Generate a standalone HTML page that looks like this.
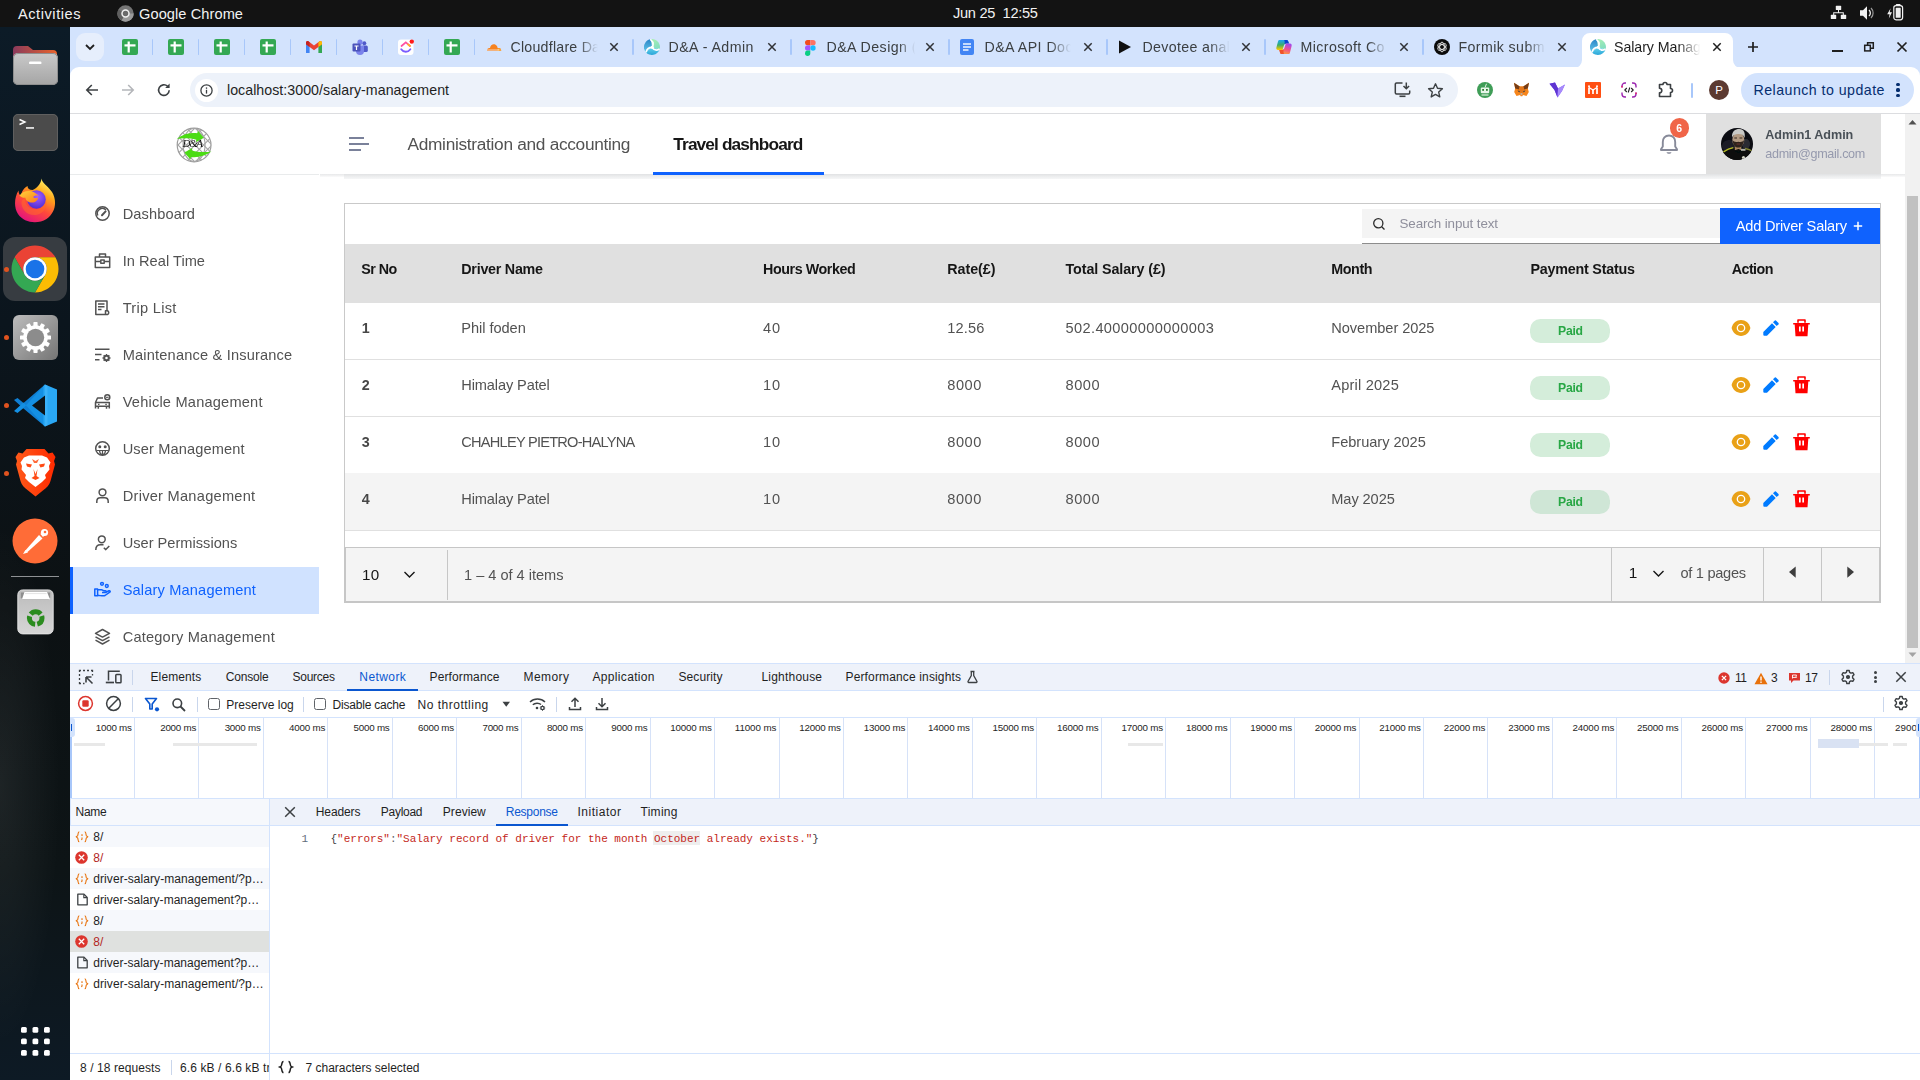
<!DOCTYPE html>
<html><head><meta charset="utf-8"><title>Salary Management</title>
<style>
html,body{margin:0;padding:0}
body{width:1920px;height:1080px;overflow:hidden;position:relative;background:#fff;font-family:"Liberation Sans",sans-serif}
body div,body span,body svg{position:absolute;display:block;box-sizing:border-box}
span{white-space:pre}
.g{left:70px;width:1850px;will-change:transform;overflow:hidden}
.gi{left:-70px;width:1920px;height:1080px}

</style></head>
<body>
<div style="left:0px;top:0px;width:1920px;height:27px;background:#131313;"></div>
<span style="left:18px;top:6px;font-size:14.6px;line-height:16px;color:#f2f2f2;letter-spacing:0.547px;">Activities</span>
<svg style="left:116.5px;top:5px;" width="17" height="17" viewBox="0 0 17 17"><circle cx="8.500" cy="8.500" r="8.200" fill="#757575"/><path d="M8.500 8.500 L16.700 8.500 A8.200 8.200 0 0 1 4.400 15.600z" fill="#9a9a9a"/><path d="M8.500 8.500 L4.400 15.600 A8.200 8.200 0 0 1 1.400 4.400z" fill="#5f5f5f"/><circle cx="8.500" cy="8.500" r="3.500" fill="#6a6a6a" stroke="#f0f0f0" stroke-width="1.500"/></svg>
<span style="left:139px;top:6px;font-size:14.6px;line-height:16px;color:#f2f2f2;letter-spacing:0.081px;">Google Chrome</span>
<span style="left:953px;top:5px;font-size:14.6px;line-height:16px;color:#f2f2f2;letter-spacing:-0.288px;">Jun 25  12:55</span>
<svg style="left:1830px;top:5px;" width="17" height="16" viewBox="0 0 17 16"><g fill="#f2f2f2"><rect x="5.800" y="0.800" width="5.400" height="4.300" rx="0.600"/><rect x="0.800" y="9.800" width="5.400" height="4.300" rx="0.600"/><rect x="10.800" y="9.800" width="5.400" height="4.300" rx="0.600"/><path d="M8 5h1v2.300h4.800v2.700h-1V8.300H4.200v1.700h-1V7.300H8z"/></g></svg>
<svg style="left:1859px;top:5px;" width="17" height="16" viewBox="0 0 17 16"><path d="M1 5.300h3l4-4v13.400l-4-4H1z" fill="#f2f2f2"/><path d="M10 5a4 4 0 0 1 0 6" stroke="#f2f2f2" stroke-width="1.300" fill="none"/><path d="M12 3a7 7 0 0 1 0 10" stroke="#9a9a9a" stroke-width="1.200" fill="none"/></svg>
<svg style="left:1886px;top:3px;" width="19" height="19" viewBox="0 0 19 19"><path d="M4.600 5.300 L1.200 11.300 H3.600 L2.800 15.600 L6 9.300 H3.700z" fill="#f2f2f2"/><rect x="7.800" y="2.600" width="8.800" height="14.200" rx="2.200" fill="none" stroke="#f2f2f2" stroke-width="1.200"/><rect x="9.800" y="0.900" width="4.800" height="1.800" rx="0.800" fill="#f2f2f2"/><rect x="9.700" y="4.800" width="5" height="10" rx="0.600" fill="#eeeeee"/></svg>
<div style="left:0px;top:27px;width:70px;height:1053px;background:radial-gradient(ellipse 60px 260px at 0px 72%,rgba(255,255,255,0.070),rgba(255,255,255,0) 100%),linear-gradient(180deg,#0c1b27 0%,#0b151d 28%,#0c1113 55%,#0d1416 80%,#0d1a25 100%);"></div>
<svg style="left:13px;top:44px;" width="45" height="42" viewBox="0 0 45 42"><defs><linearGradient id="fg1" x1="0" y1="0" x2="1" y2="0"><stop offset="0" stop-color="#8a3a5c"/><stop offset="1" stop-color="#e9632b"/></linearGradient><linearGradient id="fg2" x1="0" y1="0" x2="0" y2="1"><stop offset="0" stop-color="#c9c9c9"/><stop offset="1" stop-color="#a5a5a5"/></linearGradient></defs>
<path d="M0 6 a4 4 0 0 1 4-4 h11 l5 4 h20 a4 4 0 0 1 4 4 v10 H0z" fill="url(#fg1)"/><rect x="0" y="9" width="45" height="32" rx="5" fill="url(#fg2)"/><rect x="0.5" y="9.5" width="44" height="31" rx="4.5" fill="none" stroke="#8f8f8f" stroke-width="1"/><rect x="16" y="17.5" width="12.5" height="2.6" rx="1.2" fill="#fff"/></svg>
<svg style="left:13px;top:114px;" width="45" height="38" viewBox="0 0 45 38"><rect x="0" y="0" width="45" height="37" rx="5" fill="#4b4b4b"/><rect x="0.5" y="0.5" width="44" height="36" rx="4.5" fill="none" stroke="#5f5f5f"/><path d="M6.5 5.5 L12 8 L6.5 10.5" stroke="#fff" stroke-width="1.4" fill="none"/><rect x="13" y="13.2" width="8" height="1.5" fill="#fff"/></svg>
<svg style="left:13px;top:178px;" width="44" height="45" viewBox="0 0 44 45"><defs><linearGradient id="ffb" x1="0.800" y1="0.080" x2="0.300" y2="1"><stop offset="0" stop-color="#fff060"/><stop offset="0.280" stop-color="#ffa51a"/><stop offset="0.600" stop-color="#ff4a3a"/><stop offset="1" stop-color="#e3127e"/></linearGradient><radialGradient id="ffg" cx="0.550" cy="0.350" r="0.700"><stop offset="0" stop-color="#a45cff"/><stop offset="1" stop-color="#4a2bd0"/></radialGradient><linearGradient id="ffh" x1="0" y1="0" x2="1" y2="1"><stop offset="0" stop-color="#ffd23a"/><stop offset="1" stop-color="#ff7a1a"/></linearGradient></defs>
<path d="M28.500 0.500 C29 5 35 8 39 14 C44.500 23 42.500 35 33.500 41 C24.500 46.500 11 45 5 36 C0.500 29 1.500 19 5.500 12.500 C5.500 15 6.500 17 8 18 C8.500 13 11.500 9.500 14.500 8 C14.500 10.500 16.500 12 19.500 12 C24 10 28 6 28.500 0.500z" fill="url(#ffb)"/>
<circle cx="23.500" cy="21.500" r="9.300" fill="url(#ffg)"/>
<path d="M6.500 17.500 C10 12.500 16.500 11.800 21 14.300 L26 17.800 C23.500 17 20.800 17.500 20.200 19 C21.200 20.400 23.500 20.500 25 19.600 C25 22.500 22.300 24.600 19 24.600 C15.500 24.600 12.800 22.500 12.300 19.800 C10 20 8 19 6.500 17.500z" fill="url(#ffh)"/><path d="M12.300 19.800 C11.500 25 15 30.500 21 31.300 C27.500 32 32.500 27.500 32.800 22 C35 28 31 36 23 37 C14 38 8 31 8.500 24 C9 22 10.500 20.500 12.300 19.800z" fill="#ff6a2a" opacity="0.550"/></svg>
<div style="left:3px;top:237px;width:64px;height:64px;background:#373c41;border-radius:12px"></div>
<svg style="left:11px;top:245px;" width="48" height="48" viewBox="0 0 48 48"><path d="M3.650 12.250 A23.500 23.500 0 0 1 44.350 12.250 L24 12.250 A11.750 11.750 0 0 0 13.820 29.875z" fill="#ea4335"/><path d="M44.350 12.250 A23.500 23.500 0 0 1 24 47.500 L34.180 29.875 A11.750 11.750 0 0 0 24 12.250z" fill="#fbbc04"/><path d="M24 47.500 A23.500 23.500 0 0 1 3.650 12.250 L13.820 29.875 A11.750 11.750 0 0 0 34.180 29.875z" fill="#34a853"/><circle cx="24" cy="24" r="11.750" fill="#fff"/><circle cx="24" cy="24" r="9.300" fill="#1a73e8"/></svg>
<svg style="left:12.7px;top:315px;" width="45" height="45" viewBox="0 0 45 45"><defs><linearGradient id="sg" x1="0" y1="0" x2="1" y2="1"><stop offset="0" stop-color="#bdbdbd"/><stop offset="1" stop-color="#757575"/></linearGradient></defs><rect x="0" y="0" width="45" height="45" rx="6" fill="url(#sg)"/><g transform="translate(22.500 22.500)" fill="#fff"><rect x="-2.100" y="-15.500" width="4.200" height="5" rx="0.700" transform="rotate(0)"/><rect x="-2.100" y="-15.500" width="4.200" height="5" rx="0.700" transform="rotate(30)"/><rect x="-2.100" y="-15.500" width="4.200" height="5" rx="0.700" transform="rotate(60)"/><rect x="-2.100" y="-15.500" width="4.200" height="5" rx="0.700" transform="rotate(90)"/><rect x="-2.100" y="-15.500" width="4.200" height="5" rx="0.700" transform="rotate(120)"/><rect x="-2.100" y="-15.500" width="4.200" height="5" rx="0.700" transform="rotate(150)"/><rect x="-2.100" y="-15.500" width="4.200" height="5" rx="0.700" transform="rotate(180)"/><rect x="-2.100" y="-15.500" width="4.200" height="5" rx="0.700" transform="rotate(210)"/><rect x="-2.100" y="-15.500" width="4.200" height="5" rx="0.700" transform="rotate(240)"/><rect x="-2.100" y="-15.500" width="4.200" height="5" rx="0.700" transform="rotate(270)"/><rect x="-2.100" y="-15.500" width="4.200" height="5" rx="0.700" transform="rotate(300)"/><rect x="-2.100" y="-15.500" width="4.200" height="5" rx="0.700" transform="rotate(330)"/><circle r="12.300"/></g><circle cx="22.500" cy="22.500" r="8.700" fill="#8c8c8c"/></svg>
<svg style="left:13px;top:383px;" width="45" height="45" viewBox="0 0 45 45"><path d="M32 1.500 L10.500 20 L4.500 15 L1 17 L10.500 25.500 L32 43.500z" fill="#0f7fd4"/><path d="M32 1.500 L10.500 25 L4.500 30 L1 28 L10.500 19.500 L32 43.500z" fill="#1490e4"/><path d="M32 1.500 L44 6.500 V38.500 L32 43.500 L30.500 42 V3z" fill="#2aa8f5"/><path d="M32 12.500 L19 22.500 L32 32.500z" fill="#0c1419"/><path d="M32 1.500 L34.500 2.500 V42.500 L32 43.500z" fill="#4cbcff" opacity="0.500"/></svg>
<svg style="left:15px;top:449px;" width="41" height="48" viewBox="0 0 41 48"><defs><linearGradient id="bg1" x1="0" y1="0" x2="1" y2="0"><stop offset="0" stop-color="#ff5a1a"/><stop offset="1" stop-color="#ff2a00"/></linearGradient></defs><path d="M20.500 0 L29.500 0 L33.500 4.500 L37.500 3.500 L40.500 8 L39 12 L40 15.500 L35.500 32 C34.500 36 31.500 39 28.500 41 L20.500 47.500 L12.500 41 C9.500 39 6.500 36 5.500 32 L1 15.500 L2 12 L0.500 8 L3.500 3.500 L7.500 4.500 L11.500 0z" fill="url(#bg1)"/><path d="M20.500 6.500 L27 6.500 L32 8.500 L35.500 13.500 L34 17 L34.500 20.500 L30 26 L31 29 L27 33 L20.500 38 L14 33 L10 29 L11 26 L6.500 20.500 L7 17 L5.500 13.500 L9 8.500 L14 6.500z" fill="#fff"/><path d="M11 14.500 L17 15.500 L15.500 18.500 L12 17.500z M30 14.500 L24 15.500 L25.500 18.500 L29 17.500z" fill="#ff4a14"/><path d="M18.500 20 L20.500 25 L22.500 20 L21.500 27 L24.500 29 L20.500 31 L16.500 29 L19.500 27z" fill="#ff4a14"/><path d="M17 10 L20.500 12 L24 10 L22 14 H19z" fill="#ff6a3a"/></svg>
<svg style="left:12px;top:518px;" width="46" height="46" viewBox="0 0 46 46"><circle cx="23" cy="23" r="22.5" fill="#ff6c37"/><path d="M12.500 33.500 L27 17 L30.5 20.5 L15.500 34z" fill="#fff"/><circle cx="32.500" cy="14.500" r="3.6" fill="#fff"/><path d="M28 15.500 L31 19 L33 17z" fill="#fff"/><path d="M11 36 L13.500 32 L16 34.500z" fill="#fff"/><circle cx="33" cy="14" r="1.300" fill="#ff6c37"/></svg>
<div style="left:11px;top:576px;width:48px;height:1px;background:#8e9194;"></div>
<svg style="left:16.5px;top:589px;" width="37" height="46" viewBox="0 0 37 46"><defs><linearGradient id="tg" x1="0" y1="0" x2="0" y2="1"><stop offset="0" stop-color="#bdbdbd"/><stop offset="0.250" stop-color="#c2c2c2"/><stop offset="1" stop-color="#d6d6d6"/></linearGradient></defs><rect x="0.800" y="0.900" width="35.400" height="44" rx="4.800" fill="url(#tg)" stroke="#e6e6e6" stroke-width="0.900"/><path d="M3.800 3.500 H33.200 V8.500 L31.500 10.500 H5.500 L3.800 8.500z" fill="#8e8e8e"/><path d="M7.500 2.900 H30 L33 10.300 H5z" fill="#fff"/><path d="M8 4.600 H29.500" stroke="#dcdcdc" stroke-width="0.800"/><g transform="translate(18.700 29)"><circle r="6.300" fill="none" stroke="#2b8c1f" stroke-width="5" stroke-dasharray="11 2.200" stroke-dashoffset="3"/><path d="M-1.800 -1 L1.800 -1 L0 2.200z" fill="#c8c8c8"/></g></svg>
<div style="left:3.5px;top:266.5px;width:5px;height:5px;background:#e0531f;border-radius:50%"></div>
<div style="left:3.5px;top:334.5px;width:5px;height:5px;background:#e0531f;border-radius:50%"></div>
<div style="left:3.5px;top:402.5px;width:5px;height:5px;background:#e0531f;border-radius:50%"></div>
<div style="left:3.5px;top:470.5px;width:5px;height:5px;background:#e0531f;border-radius:50%"></div>
<svg style="left:20.5px;top:1026.5px;" width="30" height="30" viewBox="0 0 30 30"><rect x="0.0" y="0.0" width="5.800" height="5.800" rx="1.500" fill="#fff"/><rect x="11.5" y="0.0" width="5.800" height="5.800" rx="1.500" fill="#fff"/><rect x="23.0" y="0.0" width="5.800" height="5.800" rx="1.500" fill="#fff"/><rect x="0.0" y="11.5" width="5.800" height="5.800" rx="1.500" fill="#fff"/><rect x="11.5" y="11.5" width="5.800" height="5.800" rx="1.500" fill="#fff"/><rect x="23.0" y="11.5" width="5.800" height="5.800" rx="1.500" fill="#fff"/><rect x="0.0" y="23.0" width="5.800" height="5.800" rx="1.500" fill="#fff"/><rect x="11.5" y="23.0" width="5.800" height="5.800" rx="1.500" fill="#fff"/><rect x="23.0" y="23.0" width="5.800" height="5.800" rx="1.500" fill="#fff"/></svg>
<div class="g" style="top:27px;height:40px"><div class="gi" style="top:-27px">
<div style="left:70px;top:27px;width:1850px;height:41px;background:#d3e3fd;"></div>
<div style="left:76px;top:33px;width:28px;height:28px;background:#e6eefc;border-radius:9px"></div>
<svg style="left:83px;top:40px;" width="14" height="14" viewBox="0 0 14 14"><path d="M3 5 L7 9 L11 5" stroke="#1f1f1f" stroke-width="1.800" fill="none"/></svg>
<svg style="left:122px;top:39px;" width="16" height="16" viewBox="0 0 16 16"><rect x="0" y="0" width="16" height="16" rx="2" fill="#34a853"/><rect x="5.600" y="2.500" width="2.200" height="11" fill="#fff"/><rect x="2.500" y="5.300" width="11" height="2.200" fill="#fff"/></svg>
<svg style="left:168px;top:39px;" width="16" height="16" viewBox="0 0 16 16"><rect x="0" y="0" width="16" height="16" rx="2" fill="#34a853"/><rect x="5.600" y="2.500" width="2.200" height="11" fill="#fff"/><rect x="2.500" y="5.300" width="11" height="2.200" fill="#fff"/></svg>
<svg style="left:214px;top:39px;" width="16" height="16" viewBox="0 0 16 16"><rect x="0" y="0" width="16" height="16" rx="2" fill="#34a853"/><rect x="5.600" y="2.500" width="2.200" height="11" fill="#fff"/><rect x="2.500" y="5.300" width="11" height="2.200" fill="#fff"/></svg>
<svg style="left:260px;top:39px;" width="16" height="16" viewBox="0 0 16 16"><rect x="0" y="0" width="16" height="16" rx="2" fill="#34a853"/><rect x="5.600" y="2.500" width="2.200" height="11" fill="#fff"/><rect x="2.500" y="5.300" width="11" height="2.200" fill="#fff"/></svg>
<svg style="left:444px;top:39px;" width="16" height="16" viewBox="0 0 16 16"><rect x="0" y="0" width="16" height="16" rx="2" fill="#34a853"/><rect x="5.600" y="2.500" width="2.200" height="11" fill="#fff"/><rect x="2.500" y="5.300" width="11" height="2.200" fill="#fff"/></svg>
<svg style="left:306px;top:41px;" width="16" height="12" viewBox="0 0 16 12"><path d="M0 1.500 V12 H3.600 V5.800z" fill="#4285f4"/><path d="M16 1.500 V12 H12.400 V5.800z" fill="#34a853"/><path d="M0 1.500 A1.500 1.500 0 0 1 2.400 0.300 L8 4.500 L13.600 0.300 A1.500 1.500 0 0 1 16 1.500 V3.200 L8 9.200 L0 3.200z" fill="#ea4335"/><path d="M0 1.500 V3.200 L3.600 5.900 V1.200 L2.400 0.300 A1.500 1.500 0 0 0 0 1.500z" fill="#c5221f"/><path d="M16 1.500 V3.200 L12.400 5.900 V1.200 L13.600 0.300 A1.500 1.500 0 0 1 16 1.500z" fill="#fbbc04"/></svg>
<svg style="left:352px;top:39px;" width="16" height="16" viewBox="0 0 16 16"><circle cx="12.300" cy="4.200" r="2" fill="#5059c9"/><rect x="10" y="6.500" width="5.800" height="6.500" rx="1.500" fill="#5059c9"/><circle cx="8" cy="3.200" r="2.600" fill="#7b83eb"/><path d="M4 6.500 H12 V12 A4 4 0 0 1 4 12z" fill="#7b83eb"/><rect x="0.500" y="4.500" width="8" height="8" rx="1" fill="#4b53bc"/><path d="M2.500 6.500 H6.500 V7.600 H5.100 V11 H3.900 V7.600 H2.500z" fill="#fff"/></svg>
<svg style="left:398px;top:39px;" width="17" height="16" viewBox="0 0 17 16"><rect x="0" y="0.500" width="15.500" height="15.500" rx="3" fill="#fff"/><path d="M3.500 7 L7.800 3.300 L12 7" stroke="#ff4fa3" stroke-width="1.700" fill="none" stroke-linecap="round"/><path d="M3.200 10.200 C5.500 13.600 10 13.600 12.400 10.200" stroke="#7b5cff" stroke-width="1.800" fill="none" stroke-linecap="round"/><path d="M10 5.300 L12 7" stroke="#ffb020" stroke-width="1.700" stroke-linecap="round"/><circle cx="13.800" cy="2.600" r="2.200" fill="#ff1a1a"/></svg>
<div style="left:151.7px;top:39px;width:1.6px;height:16px;background:#a8c7fa;border-radius:1px"></div>
<div style="left:197.7px;top:39px;width:1.6px;height:16px;background:#a8c7fa;border-radius:1px"></div>
<div style="left:243.7px;top:39px;width:1.6px;height:16px;background:#a8c7fa;border-radius:1px"></div>
<div style="left:289.7px;top:39px;width:1.6px;height:16px;background:#a8c7fa;border-radius:1px"></div>
<div style="left:335.7px;top:39px;width:1.6px;height:16px;background:#a8c7fa;border-radius:1px"></div>
<div style="left:381.7px;top:39px;width:1.6px;height:16px;background:#a8c7fa;border-radius:1px"></div>
<div style="left:427.7px;top:39px;width:1.6px;height:16px;background:#a8c7fa;border-radius:1px"></div>
<div style="left:473.7px;top:39px;width:1.6px;height:16px;background:#a8c7fa;border-radius:1px"></div>
<span style="left:510.5px;top:39px;font-size:14.2px;line-height:16px;color:#3c4043;letter-spacing:0.229px;">Cloudflare Da</span>
<div style="left:579px;top:38px;width:27px;height:18px;background:linear-gradient(90deg,rgba(211,227,253,0) 0%,#d3e3fd 70%);"></div>
<svg style="left:606px;top:39px;" width="16" height="16" viewBox="0 0 16 16"><path d="M4.3 4.3 L11.7 11.7 M11.7 4.3 L4.3 11.7" stroke="#303236" stroke-width="1.5" fill="none"/></svg>
<span style="left:668.5px;top:39px;font-size:14.2px;line-height:16px;color:#3c4043;letter-spacing:0.456px;">D&amp;A - Admin</span>
<svg style="left:764px;top:39px;" width="16" height="16" viewBox="0 0 16 16"><path d="M4.3 4.3 L11.7 11.7 M11.7 4.3 L4.3 11.7" stroke="#303236" stroke-width="1.5" fill="none"/></svg>
<div style="left:632.2px;top:39px;width:1.6px;height:16px;background:#a8c7fa;border-radius:1px"></div>
<span style="left:826.5px;top:39px;font-size:14.2px;line-height:16px;color:#3c4043;letter-spacing:0.439px;">D&amp;A Design (</span>
<div style="left:899px;top:38px;width:23px;height:18px;background:linear-gradient(90deg,rgba(211,227,253,0) 0%,#d3e3fd 70%);"></div>
<svg style="left:922px;top:39px;" width="16" height="16" viewBox="0 0 16 16"><path d="M4.3 4.3 L11.7 11.7 M11.7 4.3 L4.3 11.7" stroke="#303236" stroke-width="1.5" fill="none"/></svg>
<div style="left:790.2px;top:39px;width:1.6px;height:16px;background:#a8c7fa;border-radius:1px"></div>
<span style="left:984.5px;top:39px;font-size:14.2px;line-height:16px;color:#3c4043;letter-spacing:0.441px;">D&amp;A API Doc</span>
<div style="left:1050px;top:38px;width:30px;height:18px;background:linear-gradient(90deg,rgba(211,227,253,0) 0%,#d3e3fd 70%);"></div>
<svg style="left:1080px;top:39px;" width="16" height="16" viewBox="0 0 16 16"><path d="M4.3 4.3 L11.7 11.7 M11.7 4.3 L4.3 11.7" stroke="#303236" stroke-width="1.5" fill="none"/></svg>
<div style="left:948.2px;top:39px;width:1.6px;height:16px;background:#a8c7fa;border-radius:1px"></div>
<span style="left:1142.5px;top:39px;font-size:14.2px;line-height:16px;color:#3c4043;letter-spacing:0.354px;">Devotee anal</span>
<div style="left:1210px;top:38px;width:28px;height:18px;background:linear-gradient(90deg,rgba(211,227,253,0) 0%,#d3e3fd 70%);"></div>
<svg style="left:1238px;top:39px;" width="16" height="16" viewBox="0 0 16 16"><path d="M4.3 4.3 L11.7 11.7 M11.7 4.3 L4.3 11.7" stroke="#303236" stroke-width="1.5" fill="none"/></svg>
<div style="left:1106.2px;top:39px;width:1.6px;height:16px;background:#a8c7fa;border-radius:1px"></div>
<span style="left:1300.5px;top:39px;font-size:14.2px;line-height:16px;color:#3c4043;letter-spacing:0.398px;">Microsoft Co</span>
<div style="left:1368px;top:38px;width:28px;height:18px;background:linear-gradient(90deg,rgba(211,227,253,0) 0%,#d3e3fd 70%);"></div>
<svg style="left:1396px;top:39px;" width="16" height="16" viewBox="0 0 16 16"><path d="M4.3 4.3 L11.7 11.7 M11.7 4.3 L4.3 11.7" stroke="#303236" stroke-width="1.5" fill="none"/></svg>
<div style="left:1264.2px;top:39px;width:1.6px;height:16px;background:#a8c7fa;border-radius:1px"></div>
<span style="left:1458.5px;top:39px;font-size:14.2px;line-height:16px;color:#3c4043;letter-spacing:0.402px;">Formik subm</span>
<div style="left:1526px;top:38px;width:28px;height:18px;background:linear-gradient(90deg,rgba(211,227,253,0) 0%,#d3e3fd 70%);"></div>
<svg style="left:1554px;top:39px;" width="16" height="16" viewBox="0 0 16 16"><path d="M4.3 4.3 L11.7 11.7 M11.7 4.3 L4.3 11.7" stroke="#303236" stroke-width="1.5" fill="none"/></svg>
<div style="left:1422.2px;top:39px;width:1.6px;height:16px;background:#a8c7fa;border-radius:1px"></div>
<svg style="left:486px;top:39px;" width="16" height="16" viewBox="0 0 16 16"><path d="M1 11.800 C0.800 9.600 2.600 8.600 4 9 C4.300 6 7.200 4.500 9.500 5.700 C11 6.500 11.600 7.800 11.600 9 H13.300 C14.800 9 15.200 11 15.200 11.800z" fill="#f6821f"/><path d="M11.800 9.500 H13.300 C14.700 9.500 15.200 11 15.200 11.800 H11.200z" fill="#fbad41"/><rect x="1" y="10.600" width="12" height="0.700" fill="#fff" opacity="0.800"/></svg>
<svg style="left:644px;top:39px;" width="16" height="16" viewBox="0 0 16 16"><defs><linearGradient id="da644" x1="0.300" y1="0" x2="0.200" y2="1"><stop offset="0" stop-color="#2b86c8"/><stop offset="1" stop-color="#63c6ea"/></linearGradient><linearGradient id="db644" x1="0.300" y1="0" x2="0.700" y2="1"><stop offset="0" stop-color="#a6efb4"/><stop offset="1" stop-color="#7fdcc0"/></linearGradient><linearGradient id="dc644" x1="0.500" y1="0" x2="0.500" y2="1"><stop offset="0" stop-color="#6ad6ee"/><stop offset="1" stop-color="#2aa6d8"/></linearGradient></defs><path d="M8 8 L1.870 13.140 A8 8 0 0 1 7.300 0.030z" fill="url(#da644)"/><path d="M8 8 L7.300 0.030 A8 8 0 0 1 15.500 10.700z" fill="url(#db644)"/><path d="M8 8 L15.500 10.700 A8 8 0 0 1 1.870 13.140z" fill="url(#dc644)"/><g fill="none" stroke="#fff" stroke-linecap="round"><path d="M6.800 0.800 C9.300 2.800 9.600 5.300 8.300 8" stroke-width="1.700"/><path d="M15 10.300 C12.500 12 10 11 8 8.500" stroke-width="1.700"/><path d="M2.300 12.600 C3 9.800 5.300 8.300 8 8.300" stroke-width="1.700"/></g><circle cx="8.300" cy="8.300" r="1.500" fill="#fff"/></svg>
<svg style="left:805px;top:39.5px;" width="11" height="16" viewBox="0 0 11 16"><path d="M0 2.600 A2.600 2.600 0 0 1 2.600 0 H5.300 V5.300 H2.600 A2.600 2.600 0 0 1 0 2.600z" fill="#f24e1e"/><path d="M5.300 0 H8 A2.600 2.600 0 0 1 8 5.300 H5.300z" fill="#ff7262"/><path d="M0 8 A2.600 2.600 0 0 1 2.600 5.300 H5.300 V10.600 H2.600 A2.600 2.600 0 0 1 0 8z" fill="#a259ff"/><circle cx="8" cy="8" r="2.650" fill="#1abcfe"/><path d="M0 13.300 A2.600 2.600 0 0 1 2.600 10.600 H5.300 V13.300 A2.650 2.650 0 0 1 0 13.300z" fill="#0acf83"/></svg>
<svg style="left:960px;top:39px;" width="14" height="16" viewBox="0 0 14 16"><rect x="0" y="0" width="14" height="16" rx="2" fill="#4285f4"/><rect x="3" y="4.300" width="8" height="1.400" fill="#fff"/><rect x="3" y="7.300" width="8" height="1.400" fill="#fff"/><rect x="3" y="10.300" width="5.500" height="1.400" fill="#fff"/></svg>
<svg style="left:1118px;top:40px;" width="14" height="14" viewBox="0 0 14 14"><path d="M1 0.500 L13 7 L1 13.500z" fill="#111"/></svg>
<svg style="left:1276px;top:39px;" width="16" height="16" viewBox="0 0 16 16"><defs><linearGradient id="cpa" x1="0" y1="0" x2="0" y2="1"><stop offset="0" stop-color="#1aa8f8"/><stop offset="0.500" stop-color="#3aac6a"/><stop offset="0.950" stop-color="#f2c900"/></linearGradient><linearGradient id="cpb" x1="0.600" y1="0" x2="0.300" y2="1"><stop offset="0" stop-color="#a548ec"/><stop offset="0.500" stop-color="#f0508c"/><stop offset="1" stop-color="#ffa03a"/></linearGradient></defs><path d="M3.200 0.900 H10.500 C11.500 0.900 12 1.500 12.300 2.500 L13 4.600 H10.500 C9 4.600 8.300 5.300 7.900 6.600 L6.500 11 H2 C0.700 11 0 10 0.400 8.600 L2 2.500 C2.300 1.400 2.700 0.900 3.200 0.900z" fill="url(#cpa)"/><path d="M8.200 0.900 H10.500 C11.500 0.900 12 1.500 12.300 2.500 L13 4.600 H10.500 C9.600 4.600 8.900 4.800 8.500 5.300 C8.900 3.800 8.800 2 8.200 0.900z" fill="#0c3fd0"/><path d="M13 15 H5.800 C4.800 15 4.300 14.400 4 13.400 L3.300 11 H6 C7.300 11 8 10.300 8.400 9 L9.800 4.600 H14 C15.300 4.600 16 5.600 15.600 7 L14 13.400 C13.700 14.500 13.300 15 13 15z" fill="url(#cpb)"/><path d="M3.300 11 H6 C6.800 11 7.400 10.800 7.800 10.300 C7.300 12 7.400 14 8 15 H5.800 C4.800 15 4.300 14.400 4 13.400z" fill="#f0522a"/></svg>
<svg style="left:1434px;top:39px;" width="16" height="16" viewBox="0 0 16 16"><circle cx="8" cy="8" r="8" fill="#0b0b0b"/><g fill="none" stroke="#fff" stroke-width="0.800"><ellipse cx="8" cy="8" rx="2.300" ry="4.800"/><ellipse cx="8" cy="8" rx="2.300" ry="4.800" transform="rotate(60 8 8)"/><ellipse cx="8" cy="8" rx="2.300" ry="4.800" transform="rotate(120 8 8)"/></g></svg>
<svg style="left:1574px;top:33px;" width="167" height="35" viewBox="0 0 167 35"><path d="M0 35 A8 8 0 0 0 8 27 V8 A8 8 0 0 1 16 0 H151 A8 8 0 0 1 159 8 V27 A8 8 0 0 0 167 35z" fill="#fff"/></svg>
<svg style="left:1590px;top:39px;" width="16" height="16" viewBox="0 0 16 16"><defs><linearGradient id="da1590" x1="0.300" y1="0" x2="0.200" y2="1"><stop offset="0" stop-color="#2b86c8"/><stop offset="1" stop-color="#63c6ea"/></linearGradient><linearGradient id="db1590" x1="0.300" y1="0" x2="0.700" y2="1"><stop offset="0" stop-color="#a6efb4"/><stop offset="1" stop-color="#7fdcc0"/></linearGradient><linearGradient id="dc1590" x1="0.500" y1="0" x2="0.500" y2="1"><stop offset="0" stop-color="#6ad6ee"/><stop offset="1" stop-color="#2aa6d8"/></linearGradient></defs><path d="M8 8 L1.870 13.140 A8 8 0 0 1 7.300 0.030z" fill="url(#da1590)"/><path d="M8 8 L7.300 0.030 A8 8 0 0 1 15.500 10.700z" fill="url(#db1590)"/><path d="M8 8 L15.500 10.700 A8 8 0 0 1 1.870 13.140z" fill="url(#dc1590)"/><g fill="none" stroke="#fff" stroke-linecap="round"><path d="M6.800 0.800 C9.300 2.800 9.600 5.300 8.300 8" stroke-width="1.700"/><path d="M15 10.300 C12.500 12 10 11 8 8.500" stroke-width="1.700"/><path d="M2.300 12.600 C3 9.800 5.300 8.300 8 8.300" stroke-width="1.700"/></g><circle cx="8.300" cy="8.300" r="1.500" fill="#fff"/></svg>
<span style="left:1614px;top:39px;font-size:14.2px;line-height:16px;color:#1f1f1f;letter-spacing:-0.050px;">Salary Manag</span>
<div style="left:1678px;top:38px;width:26px;height:18px;background:linear-gradient(90deg,rgba(255,255,255,0) 0%,#fff 85%);"></div>
<svg style="left:1709px;top:39px;" width="16" height="16" viewBox="0 0 16 16"><path d="M4.3 4.3 L11.7 11.7 M11.7 4.3 L4.3 11.7" stroke="#1f1f1f" stroke-width="1.5" fill="none"/></svg>
<svg style="left:1745px;top:39px;" width="16" height="16" viewBox="0 0 16 16"><path d="M8 3 V13 M3 8 H13" stroke="#1f1f1f" stroke-width="1.700"/></svg>
<div style="left:1832px;top:50px;width:10.5px;height:1.8px;background:#1f1f1f;"></div>
<svg style="left:1862px;top:40px;" width="14" height="14" viewBox="0 0 14 14"><rect x="2.700" y="5.300" width="5.600" height="5.600" fill="none" stroke="#1f1f1f" stroke-width="1.500"/><path d="M5.600 5 V2.700 H11.300 V8.300 H8.600" fill="none" stroke="#1f1f1f" stroke-width="1.500"/></svg>
<svg style="left:1894px;top:39.3px;" width="16" height="16" viewBox="0 0 16 16"><path d="M3.5 3.5 L12.5 12.5 M12.5 3.5 L3.5 12.5" stroke="#1f1f1f" stroke-width="1.7" fill="none"/></svg>
</div></div>
<div style="left:70px;top:67px;width:1850px;height:10px;background:#d3e3fd;"></div>
<div style="left:70px;top:67px;width:1850px;height:46px;background:#fff;border-radius:9px 9px 0 0"></div>
<div style="left:70px;top:113px;width:1850px;height:1px;background:#dcdde0;"></div>
<svg style="left:84px;top:82px;" width="16" height="16" viewBox="0 0 16 16"><path d="M14 8 H3 M7.800 3 L2.800 8 L7.800 13" stroke="#3c4043" stroke-width="1.600" fill="none"/></svg>
<svg style="left:120px;top:82px;" width="16" height="16" viewBox="0 0 16 16"><path d="M2 8 H13 M8.200 3 L13.200 8 L8.200 13" stroke="#b4b6ba" stroke-width="1.600" fill="none"/></svg>
<svg style="left:156px;top:82px;" width="16" height="16" viewBox="0 0 16 16"><path d="M13.200 8.300 A5.300 5.300 0 1 1 11.600 4.300" stroke="#3c4043" stroke-width="1.600" fill="none"/><path d="M13.600 1.600 V6 H9.200z" fill="#3c4043"/></svg>
<div style="left:190px;top:73px;width:1268px;height:34px;background:#edf2fa;border-radius:17px"></div>
<div style="left:195px;top:78.5px;width:23px;height:23px;background:#fff;border-radius:50%"></div>
<svg style="left:200px;top:83.5px;" width="13" height="13" viewBox="0 0 13 13"><circle cx="6.500" cy="6.500" r="5.600" fill="none" stroke="#3c4043" stroke-width="1.300"/><rect x="5.850" y="5.800" width="1.300" height="3.800" fill="#3c4043"/><rect x="5.850" y="3.400" width="1.300" height="1.400" fill="#3c4043"/></svg>
<span style="left:227px;top:81.5px;font-size:14.2px;line-height:16px;color:#1f1f1f;letter-spacing:0.038px;">localhost:3000/salary-management</span>
<svg style="left:1394px;top:82px;" width="18" height="16" viewBox="0 0 18 16"><path d="M8.500 1 H2.500 A1.200 1.200 0 0 0 1.300 2.200 V10.800 A1.200 1.200 0 0 0 2.500 12 H14.500 A1.200 1.200 0 0 0 15.700 10.800 V8.500" fill="none" stroke="#3c4043" stroke-width="1.500"/><path d="M5.500 14.300 H11.500" stroke="#3c4043" stroke-width="1.600"/><path d="M12.300 0.500 V6.500 M9.500 4 L12.300 6.800 L15.100 4" fill="none" stroke="#3c4043" stroke-width="1.500"/></svg>
<svg style="left:1426.5px;top:81.5px;" width="17" height="17" viewBox="0 0 17 17"><path d="M8.500 1.800 L10.500 6.300 L15.400 6.800 L11.700 10.100 L12.800 14.900 L8.500 12.400 L4.200 14.900 L5.300 10.100 L1.600 6.800 L6.500 6.300z" fill="none" stroke="#3c4043" stroke-width="1.400" stroke-linejoin="round"/></svg>
<svg style="left:1477px;top:82px;" width="16" height="16" viewBox="0 0 16 16"><circle cx="8" cy="8" r="8" fill="#3f9d57"/><rect x="3.800" y="5.500" width="8.400" height="5.800" rx="1" fill="#e8f5e9"/><rect x="5.200" y="7" width="1.800" height="1.800" fill="#2e7d32"/><rect x="9" y="7" width="1.800" height="1.800" fill="#2e7d32"/><path d="M8 5.500 L9.500 1.800" stroke="#e8f5e9" stroke-width="1"/><rect x="4.500" y="12.300" width="7" height="1.400" fill="#c8e6c9"/></svg>
<svg style="left:1513px;top:82px;" width="17" height="16" viewBox="0 0 17 16"><path d="M1 0.800 L6.800 4.500 H10.200 L16 0.800 L14.800 6.500 L15.800 10 L13.500 14 L10 13 L9.300 14.200 H7.700 L7 13 L3.500 14 L1.200 10 L2.200 6.500z" fill="#f6851b"/><path d="M1 0.800 L6.800 4.500 L6 7.500 L2.200 6.500z" fill="#763d16"/><path d="M16 0.800 L10.200 4.500 L11 7.500 L14.800 6.500z" fill="#763d16"/><path d="M6.800 4.500 H10.200 L11 7.500 L9.500 11 H7.500 L6 7.500z" fill="#e2761b"/><path d="M7.500 11 H9.500 L9.300 13 H7.700z" fill="#c0ad9e"/><path d="M4.500 8.500 L6.800 9 L6.300 10.500z M12.500 8.500 L10.200 9 L10.700 10.500z" fill="#233447"/></svg>
<svg style="left:1549px;top:82px;" width="17" height="16" viewBox="0 0 17 16"><path d="M0.500 1.800 L6 0.500 L9 6.500 L16 2.500 L13 9 L8.500 15.500 L5.500 8z" fill="#7c4dff"/><path d="M6 0.500 L9 6.500 L8.500 15.500 L5.500 8 L0.500 1.800z" fill="#5e35d1"/><path d="M9 6.500 L16 2.500 L13 9 L8.500 15.500z" fill="#a78bfa"/></svg>
<svg style="left:1585px;top:82px;" width="16" height="16" viewBox="0 0 16 16"><rect width="16" height="16" rx="1" fill="#ff4f12"/><path d="M4 12 V5.500 M8 12 V7.500 M12 12 V5.500" stroke="#fff" stroke-width="1.700"/><circle cx="4" cy="4.300" r="1" fill="#fff"/><circle cx="12" cy="4.300" r="1" fill="#fff"/><path d="M4 5.500 L8 8 L12 5.500" stroke="#fff" stroke-width="1.200" fill="none"/></svg>
<svg style="left:1621px;top:82px;" width="16" height="16" viewBox="0 0 16 16"><path d="M5 1 H4 A3 3 0 0 0 1 4 V5.500 M11 1 H12 A3 3 0 0 1 15 4 V5.500 M5 15 H4 A3 3 0 0 1 1 12 V10.500 M11 15 H12 A3 3 0 0 0 15 12 V10.500" fill="none" stroke="#9c27b0" stroke-width="1.400"/><path d="M1 4 V5.500 M15 12 V10.500" stroke="#e91e63" stroke-width="1.400"/><path d="M5.800 6 L3.800 8 L5.800 10 M10.200 6 L12.200 8 L10.200 10 M8.800 5.500 L7.200 10.500" fill="none" stroke="#222" stroke-width="1.100"/></svg>
<svg style="left:1657px;top:81px;" width="17" height="18" viewBox="0 0 17 18"><path d="M6 3.500 A2 2 0 0 1 10 3.500 H13.500 V7.500 A2 2 0 0 1 13.500 11.500 V15.500 H2.500 V11.800 A2.200 2.200 0 0 0 2.500 7.200 V3.500z" fill="none" stroke="#3c4043" stroke-width="1.600" stroke-linejoin="round"/></svg>
<div style="left:1691.3px;top:82.5px;width:1.4px;height:15px;background:#a8c7fa;border-radius:1px"></div>
<div style="left:1709px;top:80px;width:20px;height:20px;background:#5c3a31;border-radius:50%"></div>
<span style="left:1715.2px;top:84px;font-size:11.5px;line-height:12px;color:#fff;">P</span>
<div style="left:1741px;top:73px;width:173px;height:34px;background:#d3e3fd;border-radius:17px"></div>
<span style="left:1753.5px;top:81.8px;font-size:14.2px;line-height:16px;color:#062e6f;letter-spacing:0.467px;">Relaunch to update</span>
<div style="left:1896.4px;top:82.9px;width:3.2px;height:3.2px;background:#062e6f;border-radius:50%"></div>
<div style="left:1896.4px;top:88.4px;width:3.2px;height:3.2px;background:#062e6f;border-radius:50%"></div>
<div style="left:1896.4px;top:93.9px;width:3.2px;height:3.2px;background:#062e6f;border-radius:50%"></div>
<div class="g" style="top:114px;height:549px"><div class="gi" style="top:-114px">
<div style="left:70px;top:114px;width:1835px;height:549px;background:#fff;"></div>
<div style="left:1905px;top:114px;width:15px;height:549px;background:#f1f1f1;"></div>
<div style="left:1907px;top:196px;width:11px;height:452px;background:#c1c1c1;"></div>
<svg style="left:1907px;top:117px;" width="11" height="10" viewBox="0 0 11 10"><path d="M1.500 7.500 L5.500 3 L9.500 7.500z" fill="#505050"/></svg>
<svg style="left:1907px;top:650px;" width="11" height="10" viewBox="0 0 11 10"><path d="M1.500 2.500 L5.500 7 L9.500 2.500z" fill="#a3a3a3"/></svg>
<div style="left:70px;top:174px;width:249px;height:1px;background:#e9ebec;"></div>
<div style="left:344px;top:174px;width:1537px;height:5px;background:linear-gradient(180deg,rgba(20,30,45,0.130) 0%,rgba(20,30,45,0.080) 50%,rgba(20,30,45,0.040) 100%);"></div>
<div style="left:320px;top:174px;width:24px;height:3px;background:linear-gradient(180deg,rgba(20,30,45,0.100) 0%,rgba(20,30,45,0.020) 100%);"></div>
<div style="left:1881px;top:174px;width:24px;height:3px;background:linear-gradient(180deg,rgba(20,30,45,0.100) 0%,rgba(20,30,45,0.020) 100%);"></div>
<svg style="left:176.3px;top:126.5px;" width="36" height="36" viewBox="0 0 36 36"><defs><clipPath id="lgc"><circle cx="18.100" cy="18" r="17"/></clipPath></defs><circle cx="18.100" cy="18" r="16.900" fill="#fff" stroke="#9c9c9c" stroke-width="1.200"/><g clip-path="url(#lgc)" fill="none" stroke="#a4a4a4" stroke-width="1.100"><path d="M-37.0 40 L3.0 0"/><path d="M-37.0 -4 L3.0 36"/><path d="M-28.5 40 L11.5 0"/><path d="M-28.5 -4 L11.5 36"/><path d="M-20.0 40 L20.0 0"/><path d="M-20.0 -4 L20.0 36"/><path d="M-11.5 40 L28.5 0"/><path d="M-11.5 -4 L28.5 36"/><path d="M-3.0 40 L37.0 0"/><path d="M-3.0 -4 L37.0 36"/><path d="M5.5 40 L45.5 0"/><path d="M5.5 -4 L45.5 36"/><path d="M14.0 40 L54.0 0"/><path d="M14.0 -4 L54.0 36"/><path d="M22.5 40 L62.5 0"/><path d="M22.5 -4 L62.5 36"/><path d="M31.0 40 L71.0 0"/><path d="M31.0 -4 L71.0 36"/><path d="M39.5 40 L79.5 0"/><path d="M39.5 -4 L79.5 36"/><ellipse cx="18.100" cy="18" rx="11" ry="16.500"/></g><path id="lga" d="M0.800 11.800 C7 7 15 5.500 21.300 6.300 L21.800 3.800 L27.800 10.800 L19.800 15.300 L20.300 12.800 C14 11 7 11 0.800 11.800z" fill="#4bdc14"/><use href="#lga" transform="rotate(180 18.100 18.200)"/></svg>
<span style="left:182.6px;top:137.3px;font-size:11px;line-height:12px;color:#111;font-family:'Liberation Serif';letter-spacing:-1.367px;font-style:italic;">D&amp;A</span>
<div style="left:349px;top:137px;width:15px;height:1.6px;background:#7a819a;"></div>
<div style="left:349px;top:143.2px;width:19.7px;height:1.6px;background:#7a819a;"></div>
<div style="left:349px;top:149.4px;width:11.7px;height:1.6px;background:#7a819a;"></div>
<span style="left:407.5px;top:134.3px;font-size:17.3px;line-height:20px;color:#525252;letter-spacing:-0.305px;">Administration and accounting</span>
<span style="left:673.3px;top:134.3px;font-size:17.3px;line-height:20px;color:#161616;font-weight:700;letter-spacing:-0.874px;">Travel dashboard</span>
<div style="left:653px;top:172px;width:171px;height:3px;background:#0f62fe;"></div>
<svg style="left:1659px;top:134px;" width="20" height="21" viewBox="0 0 20 21"><path d="M10 1.500 C6 1.500 3.800 4.500 3.800 8 V12.500 L2 15.300 V16 H18 V15.300 L16.200 12.500 V8 C16.200 4.500 14 1.500 10 1.500z" fill="none" stroke="#878a99" stroke-width="1.900" stroke-linejoin="round"/><path d="M7.500 18.200 C8.300 20.200 11.700 20.200 12.500 18.200z" fill="#878a99"/></svg>
<div style="left:1669.5px;top:118.4px;width:19.2px;height:19.2px;background:#f06548;border-radius:50%"></div>
<span style="left:1676.3px;top:122px;font-size:10.5px;line-height:12px;color:#fff;font-weight:700;">6</span>
<div style="left:1706px;top:114px;width:175px;height:60px;background:#e0e0e0;"></div>
<svg style="left:1721px;top:128px;" width="32" height="32" viewBox="0 0 32 32"><defs><clipPath id="avc"><circle cx="16" cy="16" r="16"/></clipPath><filter id="avb" x="-10%" y="-10%" width="120%" height="120%"><feGaussianBlur stdDeviation="0.700"/></filter></defs><g clip-path="url(#avc)"><rect width="32" height="32" fill="#0b0c12"/><g filter="url(#avb)"><ellipse cx="8" cy="18" rx="7" ry="6" fill="#1c1d27"/><ellipse cx="25" cy="16" rx="4" ry="5" fill="#2a2b33"/><path d="M-1 33 L0 25 C5 22 10 21 13.500 20 L21 20 C25 21 29 22 32 24 L33 33z" fill="#07080a"/><path d="M2.500 23.800 C6 21.500 9 20.300 12.300 19.600" stroke="#b4bb25" stroke-width="1.400" fill="none"/><path d="M24 20.500 C27 21 29.500 22 31 23" stroke="#7d8030" stroke-width="1.300" fill="none"/><rect x="13.800" y="16" width="6.500" height="6.500" fill="#a8845f"/><path d="M13 22.500 L17.500 21 L21 22.500 L17.500 24.500z" fill="#07080a"/><ellipse cx="17.300" cy="11.800" rx="6" ry="7.300" fill="#b39a82"/><path d="M11 9.500 C10.500 2.500 15 0.800 18.500 1 C23 1.200 24.500 5 23.600 10 C22.500 6.500 20 5.800 17 6 C14 6.200 12 7 11 9.500z" fill="#c9c9c6"/><path d="M11.600 12 C12 17.500 14.500 19.600 17.300 19.600 C20 19.600 22.600 17.500 23 12 C21.800 14 20 14.200 17.300 13.800 C14.500 14.200 12.800 14 11.600 12z" fill="#2e221c"/><path d="M15.600 15.300 H19 V16.800 H15.600z" fill="#5a2f2a"/><path d="M13.300 10 H16 M18.500 10 H21.300" stroke="#3a2a20" stroke-width="1.200"/><rect x="20" y="20.800" width="4.500" height="2" fill="#b0b0a8"/><circle cx="22.500" cy="29.500" r="1.600" fill="#d8d8c8"/></g></g></svg>
<span style="left:1765.3px;top:127.80000000000001px;font-size:12.6px;line-height:14px;color:#495057;font-weight:700;letter-spacing:-0.036px;">Admin1 Admin</span>
<span style="left:1765.3px;top:146.8px;font-size:12.6px;line-height:14px;color:#9599ad;letter-spacing:-0.320px;">admin@gmail.com</span>
<div style="left:70px;top:567px;width:249px;height:47px;background:#d0e2ff;"></div>
<div style="left:70px;top:567px;width:3px;height:47px;background:#0f62fe;"></div>
<span style="left:122.7px;top:205.7px;font-size:14.6px;line-height:16px;color:#525252;letter-spacing:0.112px;">Dashboard</span>
<span style="left:122.7px;top:252.7px;font-size:14.6px;line-height:16px;color:#525252;letter-spacing:0.034px;">In Real Time</span>
<span style="left:122.7px;top:299.7px;font-size:14.6px;line-height:16px;color:#525252;letter-spacing:0.293px;">Trip List</span>
<span style="left:122.7px;top:346.7px;font-size:14.6px;line-height:16px;color:#525252;letter-spacing:0.182px;">Maintenance &amp; Insurance</span>
<span style="left:122.7px;top:393.7px;font-size:14.6px;line-height:16px;color:#525252;letter-spacing:0.206px;">Vehicle Management</span>
<span style="left:122.7px;top:440.7px;font-size:14.6px;line-height:16px;color:#525252;letter-spacing:0.138px;">User Management</span>
<span style="left:122.7px;top:487.7px;font-size:14.6px;line-height:16px;color:#525252;letter-spacing:0.271px;">Driver Management</span>
<span style="left:122.7px;top:534.7px;font-size:14.6px;line-height:16px;color:#525252;letter-spacing:0.010px;">User Permissions</span>
<span style="left:122.7px;top:581.7px;font-size:14.6px;line-height:16px;color:#0f62fe;letter-spacing:0.162px;">Salary Management</span>
<span style="left:122.7px;top:628.7px;font-size:14.6px;line-height:16px;color:#525252;letter-spacing:0.197px;">Category Management</span>
<svg style="left:94px;top:204.7px;" width="17" height="17" viewBox="0 0 17 17"><g fill="none" stroke="#525252" stroke-width="1.5" stroke-linejoin="round"><circle cx="8.500" cy="8.500" r="6.700"/><path d="M3.800 10.500 A5 5 0 0 1 12 5"/><path d="M8 10.300 L11.600 6.400" stroke-width="2" stroke-linecap="round"/></g></svg>
<svg style="left:94px;top:251.7px;" width="17" height="17" viewBox="0 0 17 17"><g fill="none" stroke="#525252" stroke-width="1.5" stroke-linejoin="round"><rect x="1.300" y="5" width="14.400" height="10.500"/><path d="M5.500 5 V2 H11.500 V5 M1.300 9.500 H6.500 M10.500 9.500 H15.700"/><rect x="6.800" y="8" width="3.400" height="3.200"/></g></svg>
<svg style="left:94px;top:298.7px;" width="17" height="17" viewBox="0 0 17 17"><g fill="none" stroke="#525252" stroke-width="1.5" stroke-linejoin="round"><path d="M13 12.500 V2 H1.800 V15.500 H13.500 A2 2 0 0 0 13.500 11.800 H11.500 V15.500"/><path d="M4 5 H10.500 M4 7.700 H10.500 M4 10.400 H7.500"/></g></svg>
<svg style="left:94px;top:345.7px;" width="17" height="17" viewBox="0 0 17 17"><g fill="none" stroke="#525252" stroke-width="1.5" stroke-linejoin="round"><path d="M1 3.300 H15.500 M1 8.500 H7.500 M1 13.700 H5.500"/><circle cx="12.500" cy="12" r="2.300" stroke-width="2"/><path d="M12.500 8 V9.300 M12.500 14.700 V16 M8.500 12 H9.800 M15.200 12 H16.500 M9.700 9.200 L10.600 10.100 M14.400 13.900 L15.300 14.800 M9.700 14.800 L10.600 13.900 M14.400 10.100 L15.300 9.200" stroke-width="1.300"/></g></svg>
<svg style="left:94px;top:392.7px;" width="17" height="17" viewBox="0 0 17 17"><g fill="none" stroke="#525252" stroke-width="1.5" stroke-linejoin="round"><path d="M1.500 15.500 V9.500 L3.500 5 H9"/><path d="M1.500 9.500 H15.300 V15.500 M1.500 13.300 H15.300 M4.300 13.500 V15.800 M12.500 13.500 V15.800"/><circle cx="13.300" cy="4.300" r="2.500"/><path d="M12 4.300 H14.600" stroke-width="1.100"/><path d="M4 11.300 H5.500 M11.300 11.300 H12.800" stroke-width="1.200"/></g></svg>
<svg style="left:94px;top:439.7px;" width="17" height="17" viewBox="0 0 17 17"><g fill="none" stroke="#525252" stroke-width="1.5" stroke-linejoin="round"><circle cx="8.500" cy="8.500" r="6.800"/><circle cx="5.800" cy="6.800" r="1.500" fill="#525252" stroke="none"/><circle cx="11.200" cy="6.800" r="1.500" fill="#525252" stroke="none"/><path d="M2.500 10.500 H14.500 M8.500 10.500 V15 M5.500 10.500 C5.500 12.500 6.500 14 8.500 15 M11.500 10.500 C11.500 12.500 10.500 14 8.500 15" stroke-width="1.200"/></g></svg>
<svg style="left:94px;top:486.7px;" width="17" height="17" viewBox="0 0 17 17"><g fill="none" stroke="#525252" stroke-width="1.5" stroke-linejoin="round"><circle cx="8.500" cy="5.300" r="3.400"/><path d="M2.800 16 V14.500 C2.800 12 4.500 10.800 6.300 10.800 H10.700 C12.500 10.800 14.200 12 14.200 14.500 V16"/></g></svg>
<svg style="left:94px;top:533.7px;" width="17" height="17" viewBox="0 0 17 17"><g fill="none" stroke="#525252" stroke-width="1.5" stroke-linejoin="round"><circle cx="7.800" cy="5.300" r="3.400"/><path d="M1.800 16 C1.800 12.500 4 10.800 6.500 10.800 H9.500"/><path d="M9.800 13.800 L11.800 15.600 L15.300 12" /></g></svg>
<svg style="left:94px;top:580.7px;" width="17" height="17" viewBox="0 0 17 17"><g fill="none" stroke="#0f62fe" stroke-width="1.5" stroke-linejoin="round"><circle cx="8" cy="2.800" r="1.400"/><circle cx="12.800" cy="5" r="1.400"/><rect x="0.800" y="8" width="2.800" height="6.800"/><path d="M3.600 8.800 H7.500 C8.500 8.800 9.200 9.600 10 9.800 H11.500 C12.500 9.800 12.500 11.500 11.500 11.500 H8 M11.800 11.300 L15 9.800 C16 9.500 16.600 10.600 15.800 11.200 L11 14.500 C9.500 15.300 8 14.800 3.600 14.300"/></g></svg>
<svg style="left:94px;top:627.7px;" width="17" height="17" viewBox="0 0 17 17"><g fill="none" stroke="#525252" stroke-width="1.5" stroke-linejoin="round"><path d="M8.500 1.500 L15.500 5.300 L8.500 9.100 L1.500 5.300z"/><path d="M1.500 8.800 L8.500 12.600 L15.500 8.800 M1.500 12.200 L8.500 16 L15.500 12.200"/></g></svg>
<div style="left:344px;top:203px;width:1537px;height:400px;background:transparent;border:1px solid #c9c9c9"></div>
<div style="left:1362px;top:209px;width:358px;height:29px;background:#f4f4f4;"></div>
<div style="left:1362px;top:243px;width:358px;height:1px;background:#8d8d8d;"></div>
<svg style="left:1372px;top:216.5px;" width="14" height="14" viewBox="0 0 14 14"><circle cx="6.300" cy="6.300" r="4.600" fill="none" stroke="#2b2b2b" stroke-width="1.300"/><path d="M9.700 9.700 L12.500 12.500" stroke="#2b2b2b" stroke-width="1.300"/></svg>
<span style="left:1399.5px;top:216px;font-size:13.4px;line-height:15px;color:#8f8f9c;letter-spacing:-0.125px;">Search input text</span>
<div style="left:1720px;top:208px;width:160px;height:36px;background:#0f62fe;"></div>
<span style="left:1735.8px;top:218.3px;font-size:14.6px;line-height:16px;color:#fff;letter-spacing:-0.197px;">Add Driver Salary</span>
<svg style="left:1851.5px;top:220.3px;" width="12" height="12" viewBox="0 0 12 12"><path d="M6 1.800 V10.200 M1.800 6 H10.200" stroke="#fff" stroke-width="1.500"/></svg>
<div style="left:345px;top:244px;width:1535px;height:58.5px;background:#e0e0e0;"></div>
<span style="left:361.3px;top:260.8px;font-size:14.3px;line-height:16px;color:#161616;font-weight:700;letter-spacing:-0.535px;">Sr No</span>
<span style="left:461.3px;top:260.8px;font-size:14.3px;line-height:16px;color:#161616;font-weight:700;letter-spacing:-0.255px;">Driver Name</span>
<span style="left:763px;top:260.8px;font-size:14.3px;line-height:16px;color:#161616;font-weight:700;letter-spacing:-0.423px;">Hours Worked</span>
<span style="left:947.3px;top:260.8px;font-size:14.3px;line-height:16px;color:#161616;font-weight:700;letter-spacing:-0.045px;">Rate(£)</span>
<span style="left:1065.5px;top:260.8px;font-size:14.3px;line-height:16px;color:#161616;font-weight:700;letter-spacing:-0.096px;">Total Salary (£)</span>
<span style="left:1331.3px;top:260.8px;font-size:14.3px;line-height:16px;color:#161616;font-weight:700;letter-spacing:-0.419px;">Month</span>
<span style="left:1530.5px;top:260.8px;font-size:14.3px;line-height:16px;color:#161616;font-weight:700;letter-spacing:-0.213px;">Payment Status</span>
<span style="left:1731.8px;top:260.8px;font-size:14.3px;line-height:16px;color:#161616;font-weight:700;letter-spacing:-0.577px;">Action</span>
<div style="left:345px;top:359.0px;width:1535px;height:1px;background:#e0e0e0;"></div>
<span style="left:361.7px;top:319.5px;font-size:14.3px;line-height:16px;color:#474747;font-weight:700;">1</span>
<span style="left:461.3px;top:320px;font-size:14.6px;line-height:16px;color:#525252;letter-spacing:-0.047px;">Phil foden</span>
<span style="left:763px;top:320px;font-size:14.6px;line-height:16px;color:#525252;letter-spacing:0.766px;">40</span>
<span style="left:947.3px;top:320px;font-size:14.6px;line-height:16px;color:#525252;letter-spacing:0.117px;">12.56</span>
<span style="left:1065.5px;top:320px;font-size:14.6px;line-height:16px;color:#525252;letter-spacing:0.368px;">502.40000000000003</span>
<span style="left:1331.3px;top:320px;font-size:14.6px;line-height:16px;color:#525252;letter-spacing:-0.054px;">November 2025</span>
<div style="left:1530px;top:319.3px;width:80px;height:23.5px;background:#d4edda;border-radius:10.500px"></div>
<span style="left:1558px;top:324px;font-size:12.2px;line-height:14px;color:#28a745;font-weight:700;letter-spacing:-0.250px;">Paid</span>
<svg style="left:1731px;top:319px;" width="20" height="18" viewBox="0 0 20 18"><path d="M0.600 9 C1.800 4 5.500 1.100 10 1.100 C14.500 1.100 18.200 4 19.400 9 C18.200 14 14.500 16.900 10 16.900 C5.500 16.900 1.800 14 0.600 9z" fill="#e9a117"/><circle cx="10" cy="9" r="3.700" fill="none" stroke="#fff" stroke-width="1.300"/></svg>
<svg style="left:1762px;top:319px;" width="18" height="18" viewBox="0 0 18 18"><path d="M1.300 13 L10 4.300 L13.700 8 L5 16.700 H2.300 A1 1 0 0 1 1.300 15.700z" fill="#007bff"/><path d="M11 3.300 L12.800 1.500 A0.800 0.800 0 0 1 13.900 1.500 L16.500 4.100 A0.800 0.800 0 0 1 16.500 5.200 L14.700 7z" fill="#007bff"/></svg>
<svg style="left:1792px;top:318px;" width="19" height="19" viewBox="0 0 19 19"><path d="M1.200 5 H17.800 V6.500 H16.300 L15.500 18.200 H3.500 L2.700 6.500 H1.200z" fill="#ff0000"/><path d="M6 4.800 V2 H13 V4.800" fill="none" stroke="#ff0000" stroke-width="1.600" stroke-linejoin="round"/><rect x="7" y="8.500" width="1.700" height="5" fill="#fff"/><rect x="10.300" y="8.500" width="1.700" height="5" fill="#fff"/></svg>
<div style="left:345px;top:416.0px;width:1535px;height:1px;background:#e0e0e0;"></div>
<span style="left:361.7px;top:376.5px;font-size:14.3px;line-height:16px;color:#474747;font-weight:700;">2</span>
<span style="left:461.3px;top:377px;font-size:14.6px;line-height:16px;color:#525252;letter-spacing:-0.128px;">Himalay Patel</span>
<span style="left:763px;top:377px;font-size:14.6px;line-height:16px;color:#525252;letter-spacing:0.766px;">10</span>
<span style="left:947.3px;top:377px;font-size:14.6px;line-height:16px;color:#525252;letter-spacing:0.510px;">8000</span>
<span style="left:1065.5px;top:377px;font-size:14.6px;line-height:16px;color:#525252;letter-spacing:0.510px;">8000</span>
<span style="left:1331.3px;top:377px;font-size:14.6px;line-height:16px;color:#525252;letter-spacing:0.198px;">April 2025</span>
<div style="left:1530px;top:376.3px;width:80px;height:23.5px;background:#d4edda;border-radius:10.500px"></div>
<span style="left:1558px;top:381px;font-size:12.2px;line-height:14px;color:#28a745;font-weight:700;letter-spacing:-0.250px;">Paid</span>
<svg style="left:1731px;top:376px;" width="20" height="18" viewBox="0 0 20 18"><path d="M0.600 9 C1.800 4 5.500 1.100 10 1.100 C14.500 1.100 18.200 4 19.400 9 C18.200 14 14.500 16.900 10 16.900 C5.500 16.900 1.800 14 0.600 9z" fill="#e9a117"/><circle cx="10" cy="9" r="3.700" fill="none" stroke="#fff" stroke-width="1.300"/></svg>
<svg style="left:1762px;top:376px;" width="18" height="18" viewBox="0 0 18 18"><path d="M1.300 13 L10 4.300 L13.700 8 L5 16.700 H2.300 A1 1 0 0 1 1.300 15.700z" fill="#007bff"/><path d="M11 3.300 L12.800 1.500 A0.800 0.800 0 0 1 13.900 1.500 L16.500 4.100 A0.800 0.800 0 0 1 16.500 5.200 L14.700 7z" fill="#007bff"/></svg>
<svg style="left:1792px;top:375px;" width="19" height="19" viewBox="0 0 19 19"><path d="M1.200 5 H17.800 V6.500 H16.300 L15.500 18.200 H3.500 L2.700 6.500 H1.200z" fill="#ff0000"/><path d="M6 4.800 V2 H13 V4.800" fill="none" stroke="#ff0000" stroke-width="1.600" stroke-linejoin="round"/><rect x="7" y="8.500" width="1.700" height="5" fill="#fff"/><rect x="10.300" y="8.500" width="1.700" height="5" fill="#fff"/></svg>
<div style="left:345px;top:473.0px;width:1535px;height:1px;background:#e0e0e0;"></div>
<span style="left:361.7px;top:433.5px;font-size:14.3px;line-height:16px;color:#474747;font-weight:700;">3</span>
<span style="left:461.3px;top:434px;font-size:14.6px;line-height:16px;color:#525252;letter-spacing:-0.762px;">CHAHLEY PIETRO-HALYNA</span>
<span style="left:763px;top:434px;font-size:14.6px;line-height:16px;color:#525252;letter-spacing:0.766px;">10</span>
<span style="left:947.3px;top:434px;font-size:14.6px;line-height:16px;color:#525252;letter-spacing:0.510px;">8000</span>
<span style="left:1065.5px;top:434px;font-size:14.6px;line-height:16px;color:#525252;letter-spacing:0.510px;">8000</span>
<span style="left:1331.3px;top:434px;font-size:14.6px;line-height:16px;color:#525252;letter-spacing:-0.035px;">February 2025</span>
<div style="left:1530px;top:433.3px;width:80px;height:23.5px;background:#d4edda;border-radius:10.500px"></div>
<span style="left:1558px;top:438px;font-size:12.2px;line-height:14px;color:#28a745;font-weight:700;letter-spacing:-0.250px;">Paid</span>
<svg style="left:1731px;top:433px;" width="20" height="18" viewBox="0 0 20 18"><path d="M0.600 9 C1.800 4 5.500 1.100 10 1.100 C14.500 1.100 18.200 4 19.400 9 C18.200 14 14.500 16.900 10 16.900 C5.500 16.900 1.800 14 0.600 9z" fill="#e9a117"/><circle cx="10" cy="9" r="3.700" fill="none" stroke="#fff" stroke-width="1.300"/></svg>
<svg style="left:1762px;top:433px;" width="18" height="18" viewBox="0 0 18 18"><path d="M1.300 13 L10 4.300 L13.700 8 L5 16.700 H2.300 A1 1 0 0 1 1.300 15.700z" fill="#007bff"/><path d="M11 3.300 L12.800 1.500 A0.800 0.800 0 0 1 13.900 1.500 L16.500 4.100 A0.800 0.800 0 0 1 16.500 5.200 L14.700 7z" fill="#007bff"/></svg>
<svg style="left:1792px;top:432px;" width="19" height="19" viewBox="0 0 19 19"><path d="M1.200 5 H17.800 V6.500 H16.300 L15.500 18.200 H3.500 L2.700 6.500 H1.200z" fill="#ff0000"/><path d="M6 4.800 V2 H13 V4.800" fill="none" stroke="#ff0000" stroke-width="1.600" stroke-linejoin="round"/><rect x="7" y="8.500" width="1.700" height="5" fill="#fff"/><rect x="10.300" y="8.500" width="1.700" height="5" fill="#fff"/></svg>
<div style="left:345px;top:473px;width:1535px;height:57.5px;background:#f4f4f4;"></div>
<div style="left:345px;top:530.0px;width:1535px;height:1px;background:#e0e0e0;"></div>
<span style="left:361.7px;top:490.5px;font-size:14.3px;line-height:16px;color:#474747;font-weight:700;">4</span>
<span style="left:461.3px;top:491px;font-size:14.6px;line-height:16px;color:#525252;letter-spacing:-0.128px;">Himalay Patel</span>
<span style="left:763px;top:491px;font-size:14.6px;line-height:16px;color:#525252;letter-spacing:0.766px;">10</span>
<span style="left:947.3px;top:491px;font-size:14.6px;line-height:16px;color:#525252;letter-spacing:0.510px;">8000</span>
<span style="left:1065.5px;top:491px;font-size:14.6px;line-height:16px;color:#525252;letter-spacing:0.510px;">8000</span>
<span style="left:1331.3px;top:491px;font-size:14.6px;line-height:16px;color:#525252;letter-spacing:-0.085px;">May 2025</span>
<div style="left:1530px;top:490.3px;width:80px;height:23.5px;background:#cfe6d6;border-radius:10.500px"></div>
<span style="left:1558px;top:495px;font-size:12.2px;line-height:14px;color:#28a745;font-weight:700;letter-spacing:-0.250px;">Paid</span>
<svg style="left:1731px;top:490px;" width="20" height="18" viewBox="0 0 20 18"><path d="M0.600 9 C1.800 4 5.500 1.100 10 1.100 C14.500 1.100 18.200 4 19.400 9 C18.200 14 14.500 16.900 10 16.900 C5.500 16.900 1.800 14 0.600 9z" fill="#e9a117"/><circle cx="10" cy="9" r="3.700" fill="none" stroke="#fff" stroke-width="1.300"/></svg>
<svg style="left:1762px;top:490px;" width="18" height="18" viewBox="0 0 18 18"><path d="M1.300 13 L10 4.300 L13.700 8 L5 16.700 H2.300 A1 1 0 0 1 1.300 15.700z" fill="#007bff"/><path d="M11 3.300 L12.800 1.500 A0.800 0.800 0 0 1 13.900 1.500 L16.500 4.100 A0.800 0.800 0 0 1 16.500 5.200 L14.700 7z" fill="#007bff"/></svg>
<svg style="left:1792px;top:489px;" width="19" height="19" viewBox="0 0 19 19"><path d="M1.200 5 H17.800 V6.500 H16.300 L15.500 18.200 H3.500 L2.700 6.500 H1.200z" fill="#ff0000"/><path d="M6 4.800 V2 H13 V4.800" fill="none" stroke="#ff0000" stroke-width="1.600" stroke-linejoin="round"/><rect x="7" y="8.500" width="1.700" height="5" fill="#fff"/><rect x="10.300" y="8.500" width="1.700" height="5" fill="#fff"/></svg>
<div style="left:344px;top:547px;width:1537px;height:56px;background:#f4f4f4;border:2px solid #c6c6c6;border-top-width:1.500px"></div>
<div style="left:447px;top:550px;width:1px;height:50px;background:#c6c6c6;"></div>
<div style="left:1611px;top:548px;width:1px;height:54px;background:#c6c6c6;"></div>
<div style="left:1763px;top:548px;width:1px;height:54px;background:#c6c6c6;"></div>
<div style="left:1821px;top:548px;width:1px;height:54px;background:#c6c6c6;"></div>
<span style="left:362px;top:565.7px;font-size:15.2px;line-height:17px;color:#161616;letter-spacing:0.294px;">10</span>
<svg style="left:402.5px;top:570px;" width="13" height="9" viewBox="0 0 13 9"><path d="M1.500 2 L6.500 7 L11.500 2" fill="none" stroke="#161616" stroke-width="1.400"/></svg>
<span style="left:464px;top:566.7px;font-size:14.6px;line-height:16px;color:#525252;letter-spacing:-0.019px;">1 – 4 of 4 items</span>
<span style="left:1628.7px;top:563.6px;font-size:15.4px;line-height:17px;color:#161616;">1</span>
<svg style="left:1651.5px;top:569px;" width="13" height="9" viewBox="0 0 13 9"><path d="M1.500 2 L6.500 7 L11.500 2" fill="none" stroke="#161616" stroke-width="1.400"/></svg>
<span style="left:1680.4px;top:564.6px;font-size:14.6px;line-height:16px;color:#525252;letter-spacing:-0.275px;">of 1 pages</span>
<svg style="left:1788px;top:566px;" width="8" height="13" viewBox="0 0 8 13"><path d="M7.700 0.400 V11.800 L1 6.100z" fill="#3d3d3d"/></svg>
<svg style="left:1846.5px;top:566px;" width="8" height="13" viewBox="0 0 8 13"><path d="M0.300 0.400 V11.800 L7 6.100z" fill="#3d3d3d"/></svg>
</div></div>
<div style="left:70px;top:663px;width:1850px;height:417px;background:#fff;"></div>
<div style="left:70px;top:663px;width:1850px;height:1px;background:#d3e3fd;"></div>
<div style="left:70px;top:664px;width:1850px;height:26px;background:#eef2fa;"></div>
<div style="left:70px;top:690px;width:1850px;height:1px;background:#d3e3fd;"></div>
<svg style="left:78px;top:668.5px;" width="16" height="16" viewBox="0 0 16 16"><path d="M1.500 3 V1.500 H3 M5 1.500 H7 M9 1.500 H11 M13 1.500 H14.500 V3 M14.500 5 V6.500 M1.500 5 V7 M1.500 9 V11 M1.500 13 V14.500 H3 M5 14.500 H6.500" fill="none" stroke="#3c4043" stroke-width="1.300"/><path d="M8 8 H13.500 M8 8 V13.500 M8.300 8.300 L14.500 14.500" fill="none" stroke="#3c4043" stroke-width="1.600"/></svg>
<svg style="left:105px;top:668.5px;" width="18" height="16" viewBox="0 0 18 16"><path d="M3.500 11.500 V2.300 H14.800" fill="none" stroke="#3c4043" stroke-width="1.500"/><path d="M0.800 13.500 H9" stroke="#3c4043" stroke-width="1.700"/><rect x="10.800" y="5.500" width="5.200" height="8.200" rx="0.800" fill="none" stroke="#3c4043" stroke-width="1.500"/></svg>
<div style="left:132px;top:669.5px;width:1px;height:15px;background:#c9d6ec;"></div>
<span style="left:150.5px;top:670.3px;font-size:12px;line-height:14px;color:#1f1f1f;letter-spacing:0.110px;">Elements</span>
<span style="left:225.8px;top:670.3px;font-size:12px;line-height:14px;color:#1f1f1f;letter-spacing:-0.172px;">Console</span>
<span style="left:292.5px;top:670.3px;font-size:12px;line-height:14px;color:#1f1f1f;letter-spacing:-0.255px;">Sources</span>
<span style="left:359.3px;top:670.3px;font-size:12px;line-height:14px;color:#0b57d0;letter-spacing:0.414px;">Network</span>
<span style="left:429.5px;top:670.3px;font-size:12px;line-height:14px;color:#1f1f1f;letter-spacing:0.130px;">Performance</span>
<span style="left:523.5px;top:670.3px;font-size:12px;line-height:14px;color:#1f1f1f;letter-spacing:0.431px;">Memory</span>
<span style="left:592.5px;top:670.3px;font-size:12px;line-height:14px;color:#1f1f1f;letter-spacing:0.328px;">Application</span>
<span style="left:678.5px;top:670.3px;font-size:12px;line-height:14px;color:#1f1f1f;letter-spacing:0.092px;">Security</span>
<span style="left:761.5px;top:670.3px;font-size:12px;line-height:14px;color:#1f1f1f;letter-spacing:0.198px;">Lighthouse</span>
<span style="left:845.5px;top:670.3px;font-size:12px;line-height:14px;color:#1f1f1f;letter-spacing:0.146px;">Performance insights</span>
<div style="left:347px;top:689px;width:71px;height:2px;background:#0b57d0;"></div>
<svg style="left:966px;top:670px;" width="13" height="14" viewBox="0 0 13 14"><path d="M4.500 1.500 H8.500 M5.300 1.500 V5.500 L2 11.500 A0.800 0.800 0 0 0 2.700 12.500 H10.300 A0.800 0.800 0 0 0 11 11.500 L7.700 5.500 V1.500" fill="none" stroke="#3c4043" stroke-width="1.300"/></svg>
<svg style="left:1717.5px;top:672px;" width="12" height="12" viewBox="0 0 12 12"><circle cx="6" cy="6" r="5.700" fill="#dc362e"/><path d="M3.900 3.900 L8.100 8.100 M8.100 3.900 L3.900 8.100" stroke="#fff" stroke-width="1.300"/></svg>
<span style="left:1735px;top:671.3px;font-size:12px;line-height:14px;color:#1f1f1f;letter-spacing:-0.469px;">11</span>
<svg style="left:1754px;top:671.5px;" width="14" height="13" viewBox="0 0 14 13"><path d="M7 0.800 L13.500 12.200 H0.500z" fill="#e8710a"/><rect x="6.300" y="4.500" width="1.400" height="4" fill="#fff"/><rect x="6.300" y="9.500" width="1.400" height="1.400" fill="#fff"/></svg>
<span style="left:1771px;top:671.3px;font-size:12px;line-height:14px;color:#1f1f1f;">3</span>
<svg style="left:1788px;top:672px;" width="13" height="12" viewBox="0 0 13 12"><path d="M1 1 H12 V8.500 H5.500 L3 11 V8.500 H1z" fill="#dc362e"/><path d="M4.500 3 V6.500 M4.500 3 H8.500 L8 4.200 L8.500 5.400 H4.500" stroke="#fff" stroke-width="0.900" fill="none"/></svg>
<span style="left:1805px;top:671.3px;font-size:12px;line-height:14px;color:#1f1f1f;letter-spacing:-0.359px;">17</span>
<div style="left:1829px;top:670px;width:1px;height:15px;background:#c9d6ec;"></div>
<svg style="left:1839.5px;top:668.5px;" width="16" height="16" viewBox="0 0 16 16"><g fill="none" stroke="#3c4043"><circle cx="8" cy="8" r="1.500" fill="#3c4043" stroke-width="1.200"/><path d="M6.800 1.500 H9.200 L9.600 3.400 L11 4.200 L12.800 3.600 L14 5.700 L12.600 7 V9 L14 10.300 L12.800 12.400 L11 11.800 L9.600 12.600 L9.200 14.500 H6.800 L6.400 12.600 L5 11.800 L3.200 12.400 L2 10.300 L3.400 9 V7 L2 5.700 L3.200 3.600 L5 4.200 L6.400 3.400z" stroke-width="1.400" stroke-linejoin="round"/></g></svg>
<div style="left:1874.4px;top:670.9px;width:3px;height:3px;background:#3c4043;border-radius:50%"></div>
<div style="left:1874.4px;top:675.55px;width:3px;height:3px;background:#3c4043;border-radius:50%"></div>
<div style="left:1874.4px;top:680.2px;width:3px;height:3px;background:#3c4043;border-radius:50%"></div>
<svg style="left:1893px;top:669px;" width="16" height="16" viewBox="0 0 16 16"><path d="M3.300 3.300 L12.700 12.700 M12.700 3.300 L3.300 12.700" stroke="#3c4043" stroke-width="1.500"/></svg>
<div style="left:70px;top:717px;width:1850px;height:1px;background:#d3e3fd;"></div>
<svg style="left:77px;top:695px;" width="17" height="17" viewBox="0 0 17 17"><circle cx="8.500" cy="8.500" r="6.900" fill="none" stroke="#dc362e" stroke-width="1.500"/><rect x="5.300" y="5.300" width="6.400" height="6.400" rx="1.200" fill="#dc362e"/></svg>
<svg style="left:105px;top:695px;" width="17" height="17" viewBox="0 0 17 17"><circle cx="8.500" cy="8.500" r="6.900" fill="none" stroke="#3c4043" stroke-width="1.500"/><path d="M3.800 13.200 L13.200 3.800" stroke="#3c4043" stroke-width="1.500"/></svg>
<div style="left:132px;top:696.5px;width:1px;height:15.5px;background:#c9d6ec;"></div>
<svg style="left:144px;top:697px;" width="16" height="15" viewBox="0 0 16 15"><path d="M1.500 1.500 H12.500 L8.200 7 V12 H5.800 V7z" fill="none" stroke="#0b57d0" stroke-width="1.600" stroke-linejoin="round"/><circle cx="13" cy="12.300" r="2.100" fill="#0b57d0"/></svg>
<svg style="left:171px;top:696.5px;" width="16" height="16" viewBox="0 0 16 16"><circle cx="6.300" cy="6.300" r="4.300" fill="none" stroke="#3c4043" stroke-width="1.600"/><path d="M9.500 9.500 L14 14" stroke="#3c4043" stroke-width="1.800"/></svg>
<div style="left:197px;top:696.5px;width:1px;height:15.5px;background:#c9d6ec;"></div>
<div style="left:208.3px;top:698px;width:12px;height:12px;background:#fff;border:1.300px solid #5f6368;border-radius:2.500px"></div>
<span style="left:226.3px;top:697.8px;font-size:12px;line-height:14px;color:#1f1f1f;letter-spacing:0.011px;">Preserve log</span>
<div style="left:303px;top:696.5px;width:1px;height:15.5px;background:#c9d6ec;"></div>
<div style="left:314.3px;top:698px;width:12px;height:12px;background:#fff;border:1.300px solid #5f6368;border-radius:2.500px"></div>
<span style="left:332.5px;top:697.8px;font-size:12px;line-height:14px;color:#1f1f1f;letter-spacing:-0.198px;">Disable cache</span>
<span style="left:417.5px;top:697.8px;font-size:12px;line-height:14px;color:#1f1f1f;letter-spacing:0.508px;">No throttling</span>
<svg style="left:502px;top:701px;" width="9" height="7" viewBox="0 0 9 7"><path d="M0.500 0.800 H8 L4.250 5.800z" fill="#3c4043"/></svg>
<svg style="left:529px;top:696px;" width="18" height="16" viewBox="0 0 18 16"><path d="M1 6 C5 2 12 2 16 6" fill="none" stroke="#3c4043" stroke-width="1.500"/><path d="M3.800 8.800 C6 6.700 10 6.700 12 8.500" fill="none" stroke="#3c4043" stroke-width="1.500"/><circle cx="8" cy="12" r="1.300" fill="#3c4043"/><circle cx="13.500" cy="12" r="1.600" fill="none" stroke="#3c4043" stroke-width="1.300"/><path d="M13.500 9.300 V10.200 M13.500 13.800 V14.700 M10.800 12 H11.700 M15.300 12 H16.200 M11.600 10.100 L12.200 10.700 M14.800 13.300 L15.400 13.900 M11.600 13.900 L12.200 13.300 M14.800 10.700 L15.400 10.100" stroke="#3c4043" stroke-width="1"/></svg>
<div style="left:556px;top:696.5px;width:1px;height:15.5px;background:#c9d6ec;"></div>
<svg style="left:567px;top:696px;" width="16" height="16" viewBox="0 0 16 16"><path d="M8 11 V2.500 M4.500 5.800 L8 2.300 L11.500 5.800" fill="none" stroke="#3c4043" stroke-width="1.500"/><path d="M2.500 11 V13.500 H13.500 V11" fill="none" stroke="#3c4043" stroke-width="1.500"/></svg>
<svg style="left:593.5px;top:696px;" width="16" height="16" viewBox="0 0 16 16"><path d="M8 2 V10.500 M4.500 7.200 L8 10.700 L11.500 7.200" fill="none" stroke="#3c4043" stroke-width="1.500"/><path d="M2.500 11 V13.500 H13.500 V11" fill="none" stroke="#3c4043" stroke-width="1.500"/></svg>
<div style="left:1883px;top:696.5px;width:1px;height:15.5px;background:#c9d6ec;"></div>
<svg style="left:1892.5px;top:695.2px;" width="16" height="16" viewBox="0 0 16 16"><g fill="none" stroke="#3c4043"><circle cx="8" cy="8" r="1.500" fill="#3c4043" stroke-width="1.200"/><path d="M6.800 1.500 H9.200 L9.600 3.400 L11 4.200 L12.800 3.600 L14 5.700 L12.600 7 V9 L14 10.300 L12.800 12.400 L11 11.800 L9.600 12.600 L9.200 14.500 H6.800 L6.400 12.600 L5 11.800 L3.200 12.400 L2 10.300 L3.400 9 V7 L2 5.700 L3.200 3.600 L5 4.200 L6.400 3.400z" stroke-width="1.400" stroke-linejoin="round"/></g></svg>
<div style="left:133.9px;top:718px;width:1px;height:80px;background:#d6e2f8;"></div>
<span style="left:95.75px;top:721.8px;font-size:9.8px;line-height:11px;color:#1f1f1f;letter-spacing:-0.230px;">1000 ms</span>
<div style="left:198.4px;top:718px;width:1px;height:80px;background:#d6e2f8;"></div>
<span style="left:160.2px;top:721.8px;font-size:9.8px;line-height:11px;color:#1f1f1f;letter-spacing:-0.230px;">2000 ms</span>
<div style="left:262.9px;top:718px;width:1px;height:80px;background:#d6e2f8;"></div>
<span style="left:224.65px;top:721.8px;font-size:9.8px;line-height:11px;color:#1f1f1f;letter-spacing:-0.230px;">3000 ms</span>
<div style="left:327.3px;top:718px;width:1px;height:80px;background:#d6e2f8;"></div>
<span style="left:289.1px;top:721.8px;font-size:9.8px;line-height:11px;color:#1f1f1f;letter-spacing:-0.230px;">4000 ms</span>
<div style="left:391.8px;top:718px;width:1px;height:80px;background:#d6e2f8;"></div>
<span style="left:353.55px;top:721.8px;font-size:9.8px;line-height:11px;color:#1f1f1f;letter-spacing:-0.230px;">5000 ms</span>
<div style="left:456.2px;top:718px;width:1px;height:80px;background:#d6e2f8;"></div>
<span style="left:418.0px;top:721.8px;font-size:9.8px;line-height:11px;color:#1f1f1f;letter-spacing:-0.230px;">6000 ms</span>
<div style="left:520.7px;top:718px;width:1px;height:80px;background:#d6e2f8;"></div>
<span style="left:482.45px;top:721.8px;font-size:9.8px;line-height:11px;color:#1f1f1f;letter-spacing:-0.230px;">7000 ms</span>
<div style="left:585.1px;top:718px;width:1px;height:80px;background:#d6e2f8;"></div>
<span style="left:546.9px;top:721.8px;font-size:9.8px;line-height:11px;color:#1f1f1f;letter-spacing:-0.230px;">8000 ms</span>
<div style="left:649.6px;top:718px;width:1px;height:80px;background:#d6e2f8;"></div>
<span style="left:611.35px;top:721.8px;font-size:9.8px;line-height:11px;color:#1f1f1f;letter-spacing:-0.230px;">9000 ms</span>
<div style="left:714.0px;top:718px;width:1px;height:80px;background:#d6e2f8;"></div>
<span style="left:670.3px;top:721.8px;font-size:9.8px;line-height:11px;color:#1f1f1f;letter-spacing:-0.190px;">10000 ms</span>
<div style="left:778.5px;top:718px;width:1px;height:80px;background:#d6e2f8;"></div>
<span style="left:734.75px;top:721.8px;font-size:9.8px;line-height:11px;color:#1f1f1f;letter-spacing:-0.085px;">11000 ms</span>
<div style="left:842.9px;top:718px;width:1px;height:80px;background:#d6e2f8;"></div>
<span style="left:799.2px;top:721.8px;font-size:9.8px;line-height:11px;color:#1f1f1f;letter-spacing:-0.190px;">12000 ms</span>
<div style="left:907.4px;top:718px;width:1px;height:80px;background:#d6e2f8;"></div>
<span style="left:863.65px;top:721.8px;font-size:9.8px;line-height:11px;color:#1f1f1f;letter-spacing:-0.190px;">13000 ms</span>
<div style="left:971.8px;top:718px;width:1px;height:80px;background:#d6e2f8;"></div>
<span style="left:928.1px;top:721.8px;font-size:9.8px;line-height:11px;color:#1f1f1f;letter-spacing:-0.190px;">14000 ms</span>
<div style="left:1036.2px;top:718px;width:1px;height:80px;background:#d6e2f8;"></div>
<span style="left:992.55px;top:721.8px;font-size:9.8px;line-height:11px;color:#1f1f1f;letter-spacing:-0.190px;">15000 ms</span>
<div style="left:1100.7px;top:718px;width:1px;height:80px;background:#d6e2f8;"></div>
<span style="left:1057.0px;top:721.8px;font-size:9.8px;line-height:11px;color:#1f1f1f;letter-spacing:-0.190px;">16000 ms</span>
<div style="left:1165.2px;top:718px;width:1px;height:80px;background:#d6e2f8;"></div>
<span style="left:1121.45px;top:721.8px;font-size:9.8px;line-height:11px;color:#1f1f1f;letter-spacing:-0.190px;">17000 ms</span>
<div style="left:1229.6px;top:718px;width:1px;height:80px;background:#d6e2f8;"></div>
<span style="left:1185.9px;top:721.8px;font-size:9.8px;line-height:11px;color:#1f1f1f;letter-spacing:-0.190px;">18000 ms</span>
<div style="left:1294.0px;top:718px;width:1px;height:80px;background:#d6e2f8;"></div>
<span style="left:1250.35px;top:721.8px;font-size:9.8px;line-height:11px;color:#1f1f1f;letter-spacing:-0.190px;">19000 ms</span>
<div style="left:1358.5px;top:718px;width:1px;height:80px;background:#d6e2f8;"></div>
<span style="left:1314.8px;top:721.8px;font-size:9.8px;line-height:11px;color:#1f1f1f;letter-spacing:-0.190px;">20000 ms</span>
<div style="left:1423.0px;top:718px;width:1px;height:80px;background:#d6e2f8;"></div>
<span style="left:1379.25px;top:721.8px;font-size:9.8px;line-height:11px;color:#1f1f1f;letter-spacing:-0.190px;">21000 ms</span>
<div style="left:1487.4px;top:718px;width:1px;height:80px;background:#d6e2f8;"></div>
<span style="left:1443.7px;top:721.8px;font-size:9.8px;line-height:11px;color:#1f1f1f;letter-spacing:-0.190px;">22000 ms</span>
<div style="left:1551.9px;top:718px;width:1px;height:80px;background:#d6e2f8;"></div>
<span style="left:1508.15px;top:721.8px;font-size:9.8px;line-height:11px;color:#1f1f1f;letter-spacing:-0.190px;">23000 ms</span>
<div style="left:1616.3px;top:718px;width:1px;height:80px;background:#d6e2f8;"></div>
<span style="left:1572.6px;top:721.8px;font-size:9.8px;line-height:11px;color:#1f1f1f;letter-spacing:-0.190px;">24000 ms</span>
<div style="left:1680.8px;top:718px;width:1px;height:80px;background:#d6e2f8;"></div>
<span style="left:1637.05px;top:721.8px;font-size:9.8px;line-height:11px;color:#1f1f1f;letter-spacing:-0.190px;">25000 ms</span>
<div style="left:1745.2px;top:718px;width:1px;height:80px;background:#d6e2f8;"></div>
<span style="left:1701.5px;top:721.8px;font-size:9.8px;line-height:11px;color:#1f1f1f;letter-spacing:-0.190px;">26000 ms</span>
<div style="left:1809.7px;top:718px;width:1px;height:80px;background:#d6e2f8;"></div>
<span style="left:1765.95px;top:721.8px;font-size:9.8px;line-height:11px;color:#1f1f1f;letter-spacing:-0.190px;">27000 ms</span>
<div style="left:1874.1px;top:718px;width:1px;height:80px;background:#d6e2f8;"></div>
<span style="left:1830.4px;top:721.8px;font-size:9.8px;line-height:11px;color:#1f1f1f;letter-spacing:-0.190px;">28000 ms</span>
<span style="left:1895px;top:721.8px;font-size:9.8px;line-height:11px;color:#1f1f1f;letter-spacing:0.068px;">2900</span>
<div style="left:1917px;top:718px;width:3px;height:80px;background:#fff;"></div>
<div style="left:73.5px;top:743px;width:31.5px;height:3px;background:#e8e8e8;"></div>
<div style="left:173px;top:743px;width:84px;height:3px;background:#e8e8e8;"></div>
<div style="left:1128px;top:743px;width:34.5px;height:3px;background:#e8e8e8;"></div>
<div style="left:1859px;top:743px;width:29px;height:3px;background:#e8e8e8;"></div>
<div style="left:1893px;top:743px;width:14px;height:3px;background:#e8e8e8;"></div>
<div style="left:1817.5px;top:739px;width:41.5px;height:9px;background:#d9e2f3;"></div>
<div style="left:70px;top:718px;width:1.5px;height:80px;background:#a8c7fa;"></div>
<div style="left:70px;top:718px;width:4.5px;height:18.5px;background:#d3e3fd;border-radius:0 3px 3px 0"></div>
<div style="left:71px;top:723.5px;width:1.2px;height:7px;background:#0b57d0;"></div>
<div style="left:1918.5px;top:718px;width:1.5px;height:80px;background:#a8c7fa;"></div>
<div style="left:1915.5px;top:718px;width:4.5px;height:18.5px;background:#d3e3fd;border-radius:3px 0 0 3px"></div>
<div style="left:1917.8px;top:723.5px;width:1.2px;height:7px;background:#0b57d0;"></div>
<div style="left:70px;top:798px;width:1850px;height:1px;background:#d3e3fd;"></div>
<div style="left:70px;top:799px;width:199px;height:26px;background:#f6f8fc;"></div>
<div style="left:270px;top:799px;width:1650px;height:26px;background:#eef2fa;"></div>
<div style="left:70px;top:825px;width:1850px;height:1px;background:#d3e3fd;"></div>
<div style="left:269px;top:799px;width:1px;height:281px;background:#d3e3fd;"></div>
<div style="left:70px;top:799px;width:1px;height:26px;background:#d3e3fd;"></div>
<span style="left:75.5px;top:804.8px;font-size:12px;line-height:14px;color:#1f1f1f;letter-spacing:-0.239px;">Name</span>
<svg style="left:282px;top:804px;" width="16" height="16" viewBox="0 0 16 16"><path d="M3.200 3.200 L12.800 12.800 M12.800 3.200 L3.200 12.800" stroke="#3c4043" stroke-width="1.500"/></svg>
<span style="left:315.8px;top:804.8px;font-size:12px;line-height:14px;color:#1f1f1f;letter-spacing:-0.110px;">Headers</span>
<span style="left:380.8px;top:804.8px;font-size:12px;line-height:14px;color:#1f1f1f;letter-spacing:-0.279px;">Payload</span>
<span style="left:442.8px;top:804.8px;font-size:12px;line-height:14px;color:#1f1f1f;letter-spacing:0.052px;">Preview</span>
<span style="left:505.8px;top:804.8px;font-size:12px;line-height:14px;color:#0b57d0;letter-spacing:-0.264px;">Response</span>
<span style="left:577.5px;top:804.8px;font-size:12px;line-height:14px;color:#1f1f1f;letter-spacing:0.518px;">Initiator</span>
<span style="left:640.5px;top:804.8px;font-size:12px;line-height:14px;color:#1f1f1f;letter-spacing:0.287px;">Timing</span>
<div style="left:496px;top:824px;width:71.5px;height:2px;background:#0b57d0;"></div>
<div style="left:70px;top:826px;width:199px;height:21px;background:#f6f8fc;"></div>
<span style="left:93.3px;top:829.8px;font-size:12px;line-height:14px;color:#1f1f1f;letter-spacing:-0.016px;">8/</span>
<svg style="left:75px;top:830px;" width="14" height="13" viewBox="0 0 14 13"><path d="M4.300 1.800 C2.600 1.800 3.300 4.500 2.700 5.600 L1.300 6.800 L2.700 8 C3.300 9.100 2.600 11.800 4.300 11.800" fill="none" stroke="#e8710a" stroke-width="1.100"/><path d="M9.700 1.800 C11.400 1.800 10.700 4.500 11.300 5.600 L12.700 6.800 L11.300 8 C10.700 9.100 11.400 11.800 9.700 11.800" fill="none" stroke="#e8710a" stroke-width="1.100"/><circle cx="7" cy="5" r="0.850" fill="#e8710a"/><path d="M7 7.600 V9 L6.400 9.900" stroke="#e8710a" stroke-width="1.100" fill="none"/></svg>
<span style="left:93.3px;top:850.8px;font-size:12px;line-height:14px;color:#b3261e;letter-spacing:-0.016px;">8/</span>
<svg style="left:75.3px;top:851.3px;" width="13" height="13" viewBox="0 0 13 13"><circle cx="6.500" cy="6.500" r="6.300" fill="#dc362e"/><path d="M3.800 3.800 L9.200 9.200 M9.200 3.800 L3.800 9.200" stroke="#fff" stroke-width="1.250"/></svg>
<div style="left:70px;top:868px;width:199px;height:21px;background:#f6f8fc;"></div>
<span style="left:93.3px;top:871.8px;font-size:12px;line-height:14px;color:#1f1f1f;letter-spacing:0.065px;">driver-salary-management/?p…</span>
<svg style="left:75px;top:872px;" width="14" height="13" viewBox="0 0 14 13"><path d="M4.300 1.800 C2.600 1.800 3.300 4.500 2.700 5.600 L1.300 6.800 L2.700 8 C3.300 9.100 2.600 11.800 4.300 11.800" fill="none" stroke="#e8710a" stroke-width="1.100"/><path d="M9.700 1.800 C11.400 1.800 10.700 4.500 11.300 5.600 L12.700 6.800 L11.300 8 C10.700 9.100 11.400 11.800 9.700 11.800" fill="none" stroke="#e8710a" stroke-width="1.100"/><circle cx="7" cy="5" r="0.850" fill="#e8710a"/><path d="M7 7.600 V9 L6.400 9.900" stroke="#e8710a" stroke-width="1.100" fill="none"/></svg>
<span style="left:93.3px;top:892.8px;font-size:12px;line-height:14px;color:#1f1f1f;letter-spacing:0.023px;">driver-salary-management?p…</span>
<svg style="left:75.5px;top:893px;" width="13" height="13" viewBox="0 0 13 13"><path d="M1.800 1.200 H8 L11.200 4.400 V11.800 H1.800z" fill="none" stroke="#3c4043" stroke-width="1.300" stroke-linejoin="round"/><path d="M7.800 1.500 V4.600 H11" fill="none" stroke="#3c4043" stroke-width="1.100"/></svg>
<div style="left:70px;top:910px;width:199px;height:21px;background:#f6f8fc;"></div>
<span style="left:93.3px;top:913.8px;font-size:12px;line-height:14px;color:#1f1f1f;letter-spacing:-0.016px;">8/</span>
<svg style="left:75px;top:914px;" width="14" height="13" viewBox="0 0 14 13"><path d="M4.300 1.800 C2.600 1.800 3.300 4.500 2.700 5.600 L1.300 6.800 L2.700 8 C3.300 9.100 2.600 11.800 4.300 11.800" fill="none" stroke="#e8710a" stroke-width="1.100"/><path d="M9.700 1.800 C11.400 1.800 10.700 4.500 11.300 5.600 L12.700 6.800 L11.300 8 C10.700 9.100 11.400 11.800 9.700 11.800" fill="none" stroke="#e8710a" stroke-width="1.100"/><circle cx="7" cy="5" r="0.850" fill="#e8710a"/><path d="M7 7.600 V9 L6.400 9.900" stroke="#e8710a" stroke-width="1.100" fill="none"/></svg>
<div style="left:70px;top:931px;width:199px;height:21px;background:#dfe1df;"></div>
<span style="left:93.3px;top:934.8px;font-size:12px;line-height:14px;color:#b3261e;letter-spacing:-0.016px;">8/</span>
<svg style="left:75.3px;top:935.3px;" width="13" height="13" viewBox="0 0 13 13"><circle cx="6.500" cy="6.500" r="6.300" fill="#dc362e"/><path d="M3.800 3.800 L9.200 9.200 M9.200 3.800 L3.800 9.200" stroke="#fff" stroke-width="1.250"/></svg>
<div style="left:70px;top:952px;width:199px;height:21px;background:#f6f8fc;"></div>
<span style="left:93.3px;top:955.8px;font-size:12px;line-height:14px;color:#1f1f1f;letter-spacing:0.023px;">driver-salary-management?p…</span>
<svg style="left:75.5px;top:956px;" width="13" height="13" viewBox="0 0 13 13"><path d="M1.800 1.200 H8 L11.200 4.400 V11.800 H1.800z" fill="none" stroke="#3c4043" stroke-width="1.300" stroke-linejoin="round"/><path d="M7.800 1.500 V4.600 H11" fill="none" stroke="#3c4043" stroke-width="1.100"/></svg>
<span style="left:93.3px;top:976.8px;font-size:12px;line-height:14px;color:#1f1f1f;letter-spacing:0.065px;">driver-salary-management/?p…</span>
<svg style="left:75px;top:977px;" width="14" height="13" viewBox="0 0 14 13"><path d="M4.300 1.800 C2.600 1.800 3.300 4.500 2.700 5.600 L1.300 6.800 L2.700 8 C3.300 9.100 2.600 11.800 4.300 11.800" fill="none" stroke="#e8710a" stroke-width="1.100"/><path d="M9.700 1.800 C11.400 1.800 10.700 4.500 11.300 5.600 L12.700 6.800 L11.300 8 C10.700 9.100 11.400 11.800 9.700 11.800" fill="none" stroke="#e8710a" stroke-width="1.100"/><circle cx="7" cy="5" r="0.850" fill="#e8710a"/><path d="M7 7.600 V9 L6.400 9.900" stroke="#e8710a" stroke-width="1.100" fill="none"/></svg>
<span style="left:301.5px;top:832.7px;font-size:11px;line-height:12px;color:#5f6b7a;font-family:'Liberation Mono';">1</span>
<div style="left:652.9px;top:830.5px;width:47.199999999999996px;height:14px;background:#eeeeee;"></div>
<span style="left:330.5px;top:832.7px;font-size:11px;line-height:12px;color:#3c4043;font-family:'Liberation Mono';">{</span>
<span style="left:337.1px;top:832.7px;font-size:11px;line-height:12px;color:#c4271a;font-family:'Liberation Mono';">"errors"</span>
<span style="left:389.9px;top:832.7px;font-size:11px;line-height:12px;color:#5f6368;font-family:'Liberation Mono';">:</span>
<span style="left:396.5px;top:832.7px;font-size:11px;line-height:12px;color:#c4271a;font-family:'Liberation Mono';">"Salary record of driver for the month October already exists."</span>
<span style="left:812.3px;top:832.7px;font-size:11px;line-height:12px;color:#3c4043;font-family:'Liberation Mono';">}</span>
<div style="left:70px;top:1053px;width:1850px;height:1px;background:#d3e3fd;"></div>
<span style="left:80px;top:1061px;font-size:12px;line-height:14px;color:#1f1f1f;letter-spacing:0.079px;">8 / 18 requests</span>
<div style="left:170.5px;top:1059.5px;width:1px;height:15px;background:#c9d6ec;"></div>
<div style="left:180px;top:1056px;width:88.500px;height:22px;overflow:hidden"><span style="left:0;top:5px;font-size:12px;line-height:14px;color:#1f1f1f;letter-spacing:0.100px">6.6 kB / 6.6 kB transferred</span></div>
<svg style="left:277px;top:1058px;" width="18" height="18" viewBox="0 0 18 18"><path d="M6.500 3.500 C4.200 3.500 5.400 7.300 3.900 8.300 L2.500 9 L3.900 9.700 C5.400 10.700 4.200 14.500 6.500 14.500 M11.500 3.500 C13.800 3.500 12.600 7.300 14.100 8.300 L15.500 9 L14.100 9.700 C12.600 10.700 13.800 14.500 11.500 14.500" fill="none" stroke="#1f1f1f" stroke-width="1.500"/></svg>
<span style="left:305.5px;top:1061px;font-size:12px;line-height:14px;color:#1f1f1f;letter-spacing:-0.003px;">7 characters selected</span>
</body></html>
